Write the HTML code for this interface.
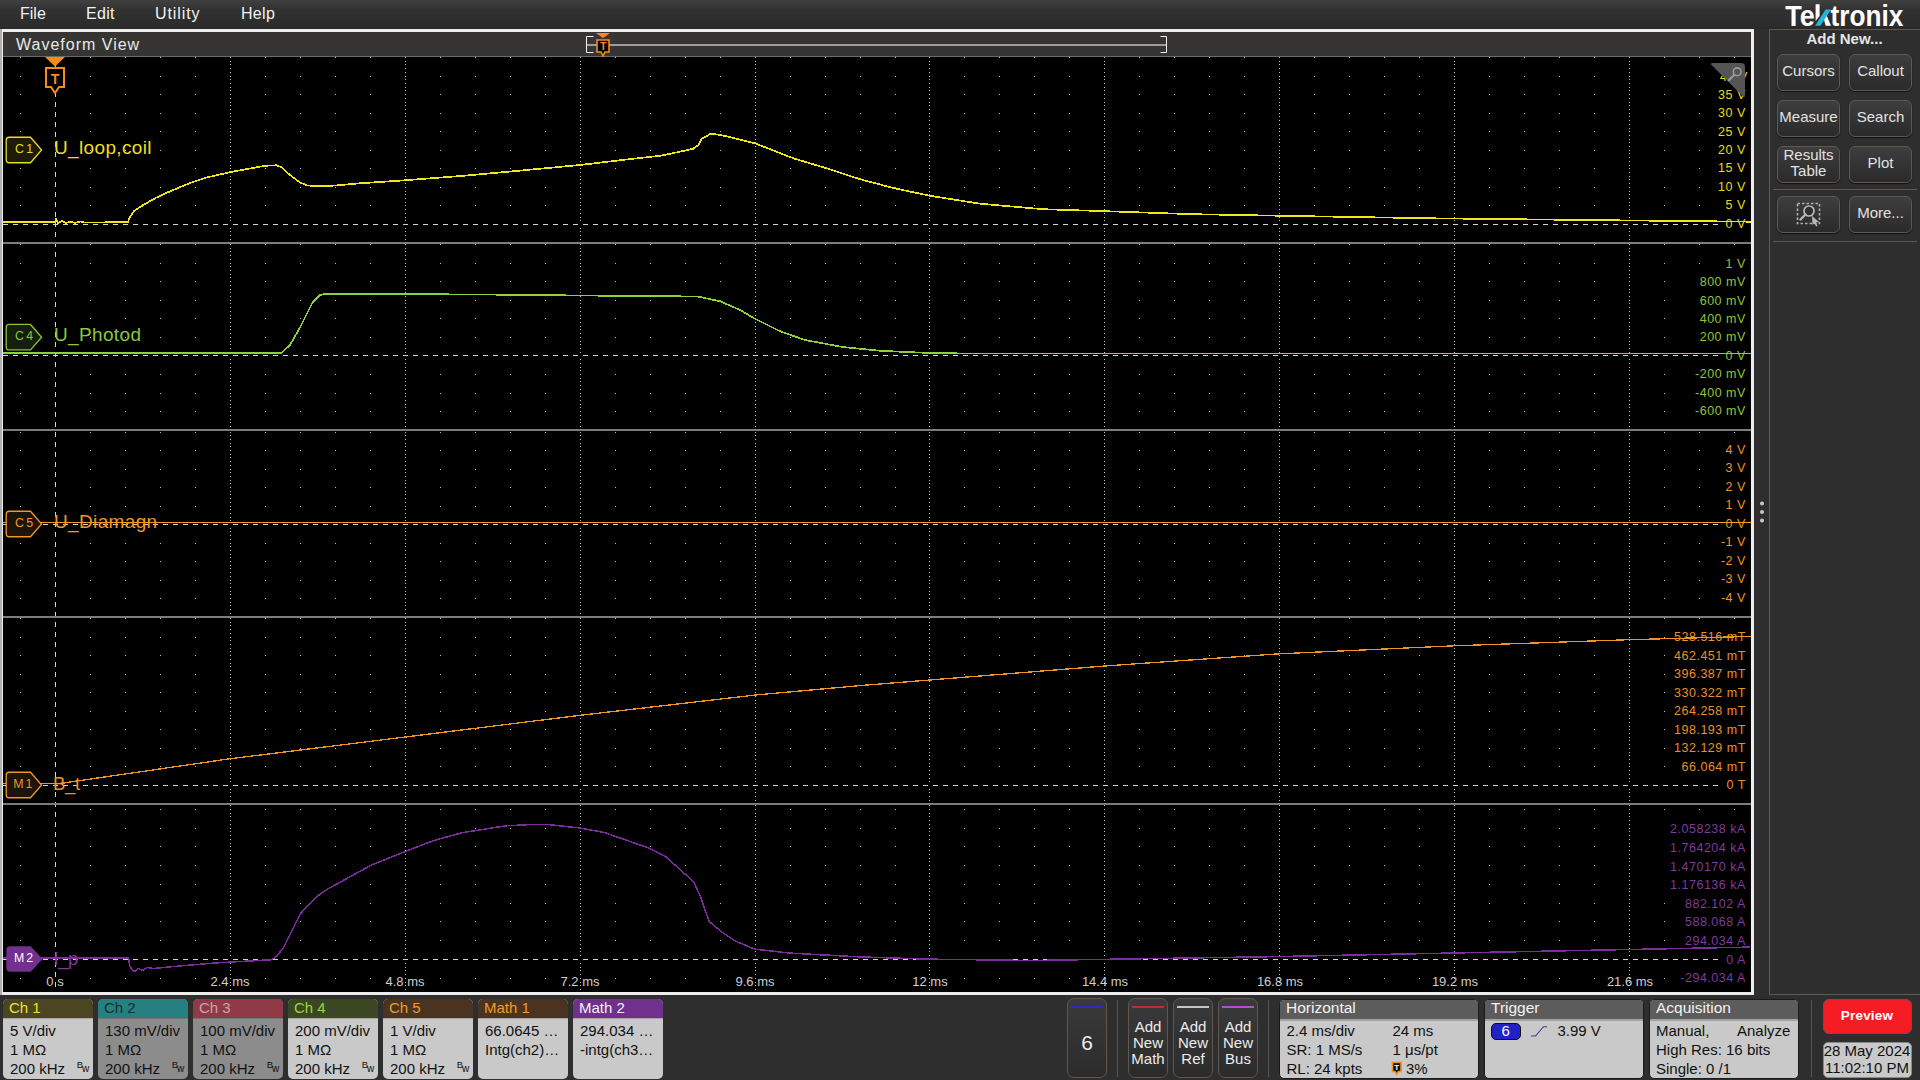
<!DOCTYPE html><html><head><meta charset="utf-8"><title>Tek</title><style>
*{margin:0;padding:0;box-sizing:border-box}
html,body{width:1920px;height:1080px;overflow:hidden;background:#2e2e2e;font-family:"Liberation Sans",sans-serif;}
.a{position:absolute;white-space:nowrap}
.mi{position:absolute;top:4px;font-size:16px;color:#f2f2f2;line-height:20px}
</style></head><body><div class="a" style="left:0;top:0;width:1920px;height:29px;background:linear-gradient(#404040 0px,#313131 10px,#2c2c2c 27px,#262626 29px)"></div><div class="mi" style="left:20px;letter-spacing:0px">File</div><div class="mi" style="left:86px;letter-spacing:0.3px">Edit</div><div class="mi" style="left:155px;letter-spacing:0.9px">Utility</div><div class="mi" style="left:241px;letter-spacing:0.3px">Help</div><div class="a" style="left:0;top:29px;width:1754px;height:966px;background:#ededed"></div><div class="a" style="left:0;top:29px;width:2px;height:966px;background:#b0b0b0"></div><div class="a" style="left:3px;top:32px;width:1748px;height:25px;background:#363533"></div><div class="a" style="left:16px;top:35.5px;font-size:16px;line-height:18px;letter-spacing:1px;color:#e8e8e8">Waveform View</div><div class="a" style="left:3px;top:57px;width:1748px;height:935px;background:#000"></div><svg class="a" style="left:0;top:0" width="1920" height="1080" viewBox="0 0 1920 1080"><path d="M195 205.5h1M160 205.5h1M125 205.5h1M90 205.5h1M20 205.5h1M265 205.5h1M300 205.5h1M335 205.5h1M370 205.5h1M440 205.5h1M475 205.5h1M510 205.5h1M545 205.5h1M615 205.5h1M650 205.5h1M685 205.5h1M720 205.5h1M790 205.5h1M825 205.5h1M860 205.5h1M895 205.5h1M964 205.5h1M999 205.5h1M1034 205.5h1M1069 205.5h1M1139 205.5h1M1174 205.5h1M1209 205.5h1M1244 205.5h1M1314 205.5h1M1349 205.5h1M1384 205.5h1M1419 205.5h1M1489 205.5h1M1524 205.5h1M1559 205.5h1M1594 205.5h1M1664 205.5h1M1699 205.5h1M1734 205.5h1M1769 205.5h1M195 187.5h1M160 187.5h1M125 187.5h1M90 187.5h1M20 187.5h1M265 187.5h1M300 187.5h1M335 187.5h1M370 187.5h1M440 187.5h1M475 187.5h1M510 187.5h1M545 187.5h1M615 187.5h1M650 187.5h1M685 187.5h1M720 187.5h1M790 187.5h1M825 187.5h1M860 187.5h1M895 187.5h1M964 187.5h1M999 187.5h1M1034 187.5h1M1069 187.5h1M1139 187.5h1M1174 187.5h1M1209 187.5h1M1244 187.5h1M1314 187.5h1M1349 187.5h1M1384 187.5h1M1419 187.5h1M1489 187.5h1M1524 187.5h1M1559 187.5h1M1594 187.5h1M1664 187.5h1M1699 187.5h1M1734 187.5h1M1769 187.5h1M195 168.5h1M160 168.5h1M125 168.5h1M90 168.5h1M20 168.5h1M265 168.5h1M300 168.5h1M335 168.5h1M370 168.5h1M440 168.5h1M475 168.5h1M510 168.5h1M545 168.5h1M615 168.5h1M650 168.5h1M685 168.5h1M720 168.5h1M790 168.5h1M825 168.5h1M860 168.5h1M895 168.5h1M964 168.5h1M999 168.5h1M1034 168.5h1M1069 168.5h1M1139 168.5h1M1174 168.5h1M1209 168.5h1M1244 168.5h1M1314 168.5h1M1349 168.5h1M1384 168.5h1M1419 168.5h1M1489 168.5h1M1524 168.5h1M1559 168.5h1M1594 168.5h1M1664 168.5h1M1699 168.5h1M1734 168.5h1M1769 168.5h1M195 150.5h1M160 150.5h1M125 150.5h1M90 150.5h1M20 150.5h1M265 150.5h1M300 150.5h1M335 150.5h1M370 150.5h1M440 150.5h1M475 150.5h1M510 150.5h1M545 150.5h1M615 150.5h1M650 150.5h1M685 150.5h1M720 150.5h1M790 150.5h1M825 150.5h1M860 150.5h1M895 150.5h1M964 150.5h1M999 150.5h1M1034 150.5h1M1069 150.5h1M1139 150.5h1M1174 150.5h1M1209 150.5h1M1244 150.5h1M1314 150.5h1M1349 150.5h1M1384 150.5h1M1419 150.5h1M1489 150.5h1M1524 150.5h1M1559 150.5h1M1594 150.5h1M1664 150.5h1M1699 150.5h1M1734 150.5h1M1769 150.5h1M195 131.5h1M160 131.5h1M125 131.5h1M90 131.5h1M20 131.5h1M265 131.5h1M300 131.5h1M335 131.5h1M370 131.5h1M440 131.5h1M475 131.5h1M510 131.5h1M545 131.5h1M615 131.5h1M650 131.5h1M685 131.5h1M720 131.5h1M790 131.5h1M825 131.5h1M860 131.5h1M895 131.5h1M964 131.5h1M999 131.5h1M1034 131.5h1M1069 131.5h1M1139 131.5h1M1174 131.5h1M1209 131.5h1M1244 131.5h1M1314 131.5h1M1349 131.5h1M1384 131.5h1M1419 131.5h1M1489 131.5h1M1524 131.5h1M1559 131.5h1M1594 131.5h1M1664 131.5h1M1699 131.5h1M1734 131.5h1M1769 131.5h1M195 113.5h1M160 113.5h1M125 113.5h1M90 113.5h1M20 113.5h1M265 113.5h1M300 113.5h1M335 113.5h1M370 113.5h1M440 113.5h1M475 113.5h1M510 113.5h1M545 113.5h1M615 113.5h1M650 113.5h1M685 113.5h1M720 113.5h1M790 113.5h1M825 113.5h1M860 113.5h1M895 113.5h1M964 113.5h1M999 113.5h1M1034 113.5h1M1069 113.5h1M1139 113.5h1M1174 113.5h1M1209 113.5h1M1244 113.5h1M1314 113.5h1M1349 113.5h1M1384 113.5h1M1419 113.5h1M1489 113.5h1M1524 113.5h1M1559 113.5h1M1594 113.5h1M1664 113.5h1M1699 113.5h1M1734 113.5h1M1769 113.5h1M195 94.5h1M160 94.5h1M125 94.5h1M90 94.5h1M20 94.5h1M265 94.5h1M300 94.5h1M335 94.5h1M370 94.5h1M440 94.5h1M475 94.5h1M510 94.5h1M545 94.5h1M615 94.5h1M650 94.5h1M685 94.5h1M720 94.5h1M790 94.5h1M825 94.5h1M860 94.5h1M895 94.5h1M964 94.5h1M999 94.5h1M1034 94.5h1M1069 94.5h1M1139 94.5h1M1174 94.5h1M1209 94.5h1M1244 94.5h1M1314 94.5h1M1349 94.5h1M1384 94.5h1M1419 94.5h1M1489 94.5h1M1524 94.5h1M1559 94.5h1M1594 94.5h1M1664 94.5h1M1699 94.5h1M1734 94.5h1M1769 94.5h1M195 76.5h1M160 76.5h1M125 76.5h1M90 76.5h1M20 76.5h1M265 76.5h1M300 76.5h1M335 76.5h1M370 76.5h1M440 76.5h1M475 76.5h1M510 76.5h1M545 76.5h1M615 76.5h1M650 76.5h1M685 76.5h1M720 76.5h1M790 76.5h1M825 76.5h1M860 76.5h1M895 76.5h1M964 76.5h1M999 76.5h1M1034 76.5h1M1069 76.5h1M1139 76.5h1M1174 76.5h1M1209 76.5h1M1244 76.5h1M1314 76.5h1M1349 76.5h1M1384 76.5h1M1419 76.5h1M1489 76.5h1M1524 76.5h1M1559 76.5h1M1594 76.5h1M1664 76.5h1M1699 76.5h1M1734 76.5h1M1769 76.5h1M195 57.5h1M160 57.5h1M125 57.5h1M90 57.5h1M20 57.5h1M265 57.5h1M300 57.5h1M335 57.5h1M370 57.5h1M440 57.5h1M475 57.5h1M510 57.5h1M545 57.5h1M615 57.5h1M650 57.5h1M685 57.5h1M720 57.5h1M790 57.5h1M825 57.5h1M860 57.5h1M895 57.5h1M964 57.5h1M999 57.5h1M1034 57.5h1M1069 57.5h1M1139 57.5h1M1174 57.5h1M1209 57.5h1M1244 57.5h1M1314 57.5h1M1349 57.5h1M1384 57.5h1M1419 57.5h1M1489 57.5h1M1524 57.5h1M1559 57.5h1M1594 57.5h1M1664 57.5h1M1699 57.5h1M1734 57.5h1M1769 57.5h1M230 239.5h1M405 239.5h1M580 239.5h1M755 239.5h1M929 239.5h1M1104 239.5h1M1279 239.5h1M1454 239.5h1M1629 239.5h1M230 235.5h1M405 235.5h1M580 235.5h1M755 235.5h1M929 235.5h1M1104 235.5h1M1279 235.5h1M1454 235.5h1M1629 235.5h1M230 231.5h1M405 231.5h1M580 231.5h1M755 231.5h1M929 231.5h1M1104 231.5h1M1279 231.5h1M1454 231.5h1M1629 231.5h1M230 228.5h1M405 228.5h1M580 228.5h1M755 228.5h1M929 228.5h1M1104 228.5h1M1279 228.5h1M1454 228.5h1M1629 228.5h1M230 220.5h1M405 220.5h1M580 220.5h1M755 220.5h1M929 220.5h1M1104 220.5h1M1279 220.5h1M1454 220.5h1M1629 220.5h1M230 217.5h1M405 217.5h1M580 217.5h1M755 217.5h1M929 217.5h1M1104 217.5h1M1279 217.5h1M1454 217.5h1M1629 217.5h1M230 213.5h1M405 213.5h1M580 213.5h1M755 213.5h1M929 213.5h1M1104 213.5h1M1279 213.5h1M1454 213.5h1M1629 213.5h1M230 209.5h1M405 209.5h1M580 209.5h1M755 209.5h1M929 209.5h1M1104 209.5h1M1279 209.5h1M1454 209.5h1M1629 209.5h1M230 205.5h1M405 205.5h1M580 205.5h1M755 205.5h1M929 205.5h1M1104 205.5h1M1279 205.5h1M1454 205.5h1M1629 205.5h1M230 202.5h1M405 202.5h1M580 202.5h1M755 202.5h1M929 202.5h1M1104 202.5h1M1279 202.5h1M1454 202.5h1M1629 202.5h1M230 198.5h1M405 198.5h1M580 198.5h1M755 198.5h1M929 198.5h1M1104 198.5h1M1279 198.5h1M1454 198.5h1M1629 198.5h1M230 194.5h1M405 194.5h1M580 194.5h1M755 194.5h1M929 194.5h1M1104 194.5h1M1279 194.5h1M1454 194.5h1M1629 194.5h1M230 191.5h1M405 191.5h1M580 191.5h1M755 191.5h1M929 191.5h1M1104 191.5h1M1279 191.5h1M1454 191.5h1M1629 191.5h1M230 187.5h1M405 187.5h1M580 187.5h1M755 187.5h1M929 187.5h1M1104 187.5h1M1279 187.5h1M1454 187.5h1M1629 187.5h1M230 183.5h1M405 183.5h1M580 183.5h1M755 183.5h1M929 183.5h1M1104 183.5h1M1279 183.5h1M1454 183.5h1M1629 183.5h1M230 179.5h1M405 179.5h1M580 179.5h1M755 179.5h1M929 179.5h1M1104 179.5h1M1279 179.5h1M1454 179.5h1M1629 179.5h1M230 176.5h1M405 176.5h1M580 176.5h1M755 176.5h1M929 176.5h1M1104 176.5h1M1279 176.5h1M1454 176.5h1M1629 176.5h1M230 172.5h1M405 172.5h1M580 172.5h1M755 172.5h1M929 172.5h1M1104 172.5h1M1279 172.5h1M1454 172.5h1M1629 172.5h1M230 168.5h1M405 168.5h1M580 168.5h1M755 168.5h1M929 168.5h1M1104 168.5h1M1279 168.5h1M1454 168.5h1M1629 168.5h1M230 165.5h1M405 165.5h1M580 165.5h1M755 165.5h1M929 165.5h1M1104 165.5h1M1279 165.5h1M1454 165.5h1M1629 165.5h1M230 161.5h1M405 161.5h1M580 161.5h1M755 161.5h1M929 161.5h1M1104 161.5h1M1279 161.5h1M1454 161.5h1M1629 161.5h1M230 157.5h1M405 157.5h1M580 157.5h1M755 157.5h1M929 157.5h1M1104 157.5h1M1279 157.5h1M1454 157.5h1M1629 157.5h1M230 153.5h1M405 153.5h1M580 153.5h1M755 153.5h1M929 153.5h1M1104 153.5h1M1279 153.5h1M1454 153.5h1M1629 153.5h1M230 150.5h1M405 150.5h1M580 150.5h1M755 150.5h1M929 150.5h1M1104 150.5h1M1279 150.5h1M1454 150.5h1M1629 150.5h1M230 146.5h1M405 146.5h1M580 146.5h1M755 146.5h1M929 146.5h1M1104 146.5h1M1279 146.5h1M1454 146.5h1M1629 146.5h1M230 142.5h1M405 142.5h1M580 142.5h1M755 142.5h1M929 142.5h1M1104 142.5h1M1279 142.5h1M1454 142.5h1M1629 142.5h1M230 139.5h1M405 139.5h1M580 139.5h1M755 139.5h1M929 139.5h1M1104 139.5h1M1279 139.5h1M1454 139.5h1M1629 139.5h1M230 135.5h1M405 135.5h1M580 135.5h1M755 135.5h1M929 135.5h1M1104 135.5h1M1279 135.5h1M1454 135.5h1M1629 135.5h1M230 131.5h1M405 131.5h1M580 131.5h1M755 131.5h1M929 131.5h1M1104 131.5h1M1279 131.5h1M1454 131.5h1M1629 131.5h1M230 128.5h1M405 128.5h1M580 128.5h1M755 128.5h1M929 128.5h1M1104 128.5h1M1279 128.5h1M1454 128.5h1M1629 128.5h1M230 124.5h1M405 124.5h1M580 124.5h1M755 124.5h1M929 124.5h1M1104 124.5h1M1279 124.5h1M1454 124.5h1M1629 124.5h1M230 120.5h1M405 120.5h1M580 120.5h1M755 120.5h1M929 120.5h1M1104 120.5h1M1279 120.5h1M1454 120.5h1M1629 120.5h1M230 116.5h1M405 116.5h1M580 116.5h1M755 116.5h1M929 116.5h1M1104 116.5h1M1279 116.5h1M1454 116.5h1M1629 116.5h1M230 113.5h1M405 113.5h1M580 113.5h1M755 113.5h1M929 113.5h1M1104 113.5h1M1279 113.5h1M1454 113.5h1M1629 113.5h1M230 109.5h1M405 109.5h1M580 109.5h1M755 109.5h1M929 109.5h1M1104 109.5h1M1279 109.5h1M1454 109.5h1M1629 109.5h1M230 105.5h1M405 105.5h1M580 105.5h1M755 105.5h1M929 105.5h1M1104 105.5h1M1279 105.5h1M1454 105.5h1M1629 105.5h1M230 102.5h1M405 102.5h1M580 102.5h1M755 102.5h1M929 102.5h1M1104 102.5h1M1279 102.5h1M1454 102.5h1M1629 102.5h1M230 98.5h1M405 98.5h1M580 98.5h1M755 98.5h1M929 98.5h1M1104 98.5h1M1279 98.5h1M1454 98.5h1M1629 98.5h1M230 94.5h1M405 94.5h1M580 94.5h1M755 94.5h1M929 94.5h1M1104 94.5h1M1279 94.5h1M1454 94.5h1M1629 94.5h1M230 90.5h1M405 90.5h1M580 90.5h1M755 90.5h1M929 90.5h1M1104 90.5h1M1279 90.5h1M1454 90.5h1M1629 90.5h1M230 87.5h1M405 87.5h1M580 87.5h1M755 87.5h1M929 87.5h1M1104 87.5h1M1279 87.5h1M1454 87.5h1M1629 87.5h1M230 83.5h1M405 83.5h1M580 83.5h1M755 83.5h1M929 83.5h1M1104 83.5h1M1279 83.5h1M1454 83.5h1M1629 83.5h1M230 79.5h1M405 79.5h1M580 79.5h1M755 79.5h1M929 79.5h1M1104 79.5h1M1279 79.5h1M1454 79.5h1M1629 79.5h1M230 76.5h1M405 76.5h1M580 76.5h1M755 76.5h1M929 76.5h1M1104 76.5h1M1279 76.5h1M1454 76.5h1M1629 76.5h1M230 72.5h1M405 72.5h1M580 72.5h1M755 72.5h1M929 72.5h1M1104 72.5h1M1279 72.5h1M1454 72.5h1M1629 72.5h1M230 68.5h1M405 68.5h1M580 68.5h1M755 68.5h1M929 68.5h1M1104 68.5h1M1279 68.5h1M1454 68.5h1M1629 68.5h1M230 64.5h1M405 64.5h1M580 64.5h1M755 64.5h1M929 64.5h1M1104 64.5h1M1279 64.5h1M1454 64.5h1M1629 64.5h1M230 61.5h1M405 61.5h1M580 61.5h1M755 61.5h1M929 61.5h1M1104 61.5h1M1279 61.5h1M1454 61.5h1M1629 61.5h1M230 57.5h1M405 57.5h1M580 57.5h1M755 57.5h1M929 57.5h1M1104 57.5h1M1279 57.5h1M1454 57.5h1M1629 57.5h1M195 411.5h1M160 411.5h1M125 411.5h1M90 411.5h1M20 411.5h1M265 411.5h1M300 411.5h1M335 411.5h1M370 411.5h1M440 411.5h1M475 411.5h1M510 411.5h1M545 411.5h1M615 411.5h1M650 411.5h1M685 411.5h1M720 411.5h1M790 411.5h1M825 411.5h1M860 411.5h1M895 411.5h1M964 411.5h1M999 411.5h1M1034 411.5h1M1069 411.5h1M1139 411.5h1M1174 411.5h1M1209 411.5h1M1244 411.5h1M1314 411.5h1M1349 411.5h1M1384 411.5h1M1419 411.5h1M1489 411.5h1M1524 411.5h1M1559 411.5h1M1594 411.5h1M1664 411.5h1M1699 411.5h1M1734 411.5h1M1769 411.5h1M195 393.5h1M160 393.5h1M125 393.5h1M90 393.5h1M20 393.5h1M265 393.5h1M300 393.5h1M335 393.5h1M370 393.5h1M440 393.5h1M475 393.5h1M510 393.5h1M545 393.5h1M615 393.5h1M650 393.5h1M685 393.5h1M720 393.5h1M790 393.5h1M825 393.5h1M860 393.5h1M895 393.5h1M964 393.5h1M999 393.5h1M1034 393.5h1M1069 393.5h1M1139 393.5h1M1174 393.5h1M1209 393.5h1M1244 393.5h1M1314 393.5h1M1349 393.5h1M1384 393.5h1M1419 393.5h1M1489 393.5h1M1524 393.5h1M1559 393.5h1M1594 393.5h1M1664 393.5h1M1699 393.5h1M1734 393.5h1M1769 393.5h1M195 374.5h1M160 374.5h1M125 374.5h1M90 374.5h1M20 374.5h1M265 374.5h1M300 374.5h1M335 374.5h1M370 374.5h1M440 374.5h1M475 374.5h1M510 374.5h1M545 374.5h1M615 374.5h1M650 374.5h1M685 374.5h1M720 374.5h1M790 374.5h1M825 374.5h1M860 374.5h1M895 374.5h1M964 374.5h1M999 374.5h1M1034 374.5h1M1069 374.5h1M1139 374.5h1M1174 374.5h1M1209 374.5h1M1244 374.5h1M1314 374.5h1M1349 374.5h1M1384 374.5h1M1419 374.5h1M1489 374.5h1M1524 374.5h1M1559 374.5h1M1594 374.5h1M1664 374.5h1M1699 374.5h1M1734 374.5h1M1769 374.5h1M195 337.5h1M160 337.5h1M125 337.5h1M90 337.5h1M20 337.5h1M265 337.5h1M300 337.5h1M335 337.5h1M370 337.5h1M440 337.5h1M475 337.5h1M510 337.5h1M545 337.5h1M615 337.5h1M650 337.5h1M685 337.5h1M720 337.5h1M790 337.5h1M825 337.5h1M860 337.5h1M895 337.5h1M964 337.5h1M999 337.5h1M1034 337.5h1M1069 337.5h1M1139 337.5h1M1174 337.5h1M1209 337.5h1M1244 337.5h1M1314 337.5h1M1349 337.5h1M1384 337.5h1M1419 337.5h1M1489 337.5h1M1524 337.5h1M1559 337.5h1M1594 337.5h1M1664 337.5h1M1699 337.5h1M1734 337.5h1M1769 337.5h1M195 318.5h1M160 318.5h1M125 318.5h1M90 318.5h1M20 318.5h1M265 318.5h1M300 318.5h1M335 318.5h1M370 318.5h1M440 318.5h1M475 318.5h1M510 318.5h1M545 318.5h1M615 318.5h1M650 318.5h1M685 318.5h1M720 318.5h1M790 318.5h1M825 318.5h1M860 318.5h1M895 318.5h1M964 318.5h1M999 318.5h1M1034 318.5h1M1069 318.5h1M1139 318.5h1M1174 318.5h1M1209 318.5h1M1244 318.5h1M1314 318.5h1M1349 318.5h1M1384 318.5h1M1419 318.5h1M1489 318.5h1M1524 318.5h1M1559 318.5h1M1594 318.5h1M1664 318.5h1M1699 318.5h1M1734 318.5h1M1769 318.5h1M195 300.5h1M160 300.5h1M125 300.5h1M90 300.5h1M20 300.5h1M265 300.5h1M300 300.5h1M335 300.5h1M370 300.5h1M440 300.5h1M475 300.5h1M510 300.5h1M545 300.5h1M615 300.5h1M650 300.5h1M685 300.5h1M720 300.5h1M790 300.5h1M825 300.5h1M860 300.5h1M895 300.5h1M964 300.5h1M999 300.5h1M1034 300.5h1M1069 300.5h1M1139 300.5h1M1174 300.5h1M1209 300.5h1M1244 300.5h1M1314 300.5h1M1349 300.5h1M1384 300.5h1M1419 300.5h1M1489 300.5h1M1524 300.5h1M1559 300.5h1M1594 300.5h1M1664 300.5h1M1699 300.5h1M1734 300.5h1M1769 300.5h1M195 281.5h1M160 281.5h1M125 281.5h1M90 281.5h1M20 281.5h1M265 281.5h1M300 281.5h1M335 281.5h1M370 281.5h1M440 281.5h1M475 281.5h1M510 281.5h1M545 281.5h1M615 281.5h1M650 281.5h1M685 281.5h1M720 281.5h1M790 281.5h1M825 281.5h1M860 281.5h1M895 281.5h1M964 281.5h1M999 281.5h1M1034 281.5h1M1069 281.5h1M1139 281.5h1M1174 281.5h1M1209 281.5h1M1244 281.5h1M1314 281.5h1M1349 281.5h1M1384 281.5h1M1419 281.5h1M1489 281.5h1M1524 281.5h1M1559 281.5h1M1594 281.5h1M1664 281.5h1M1699 281.5h1M1734 281.5h1M1769 281.5h1M195 263.5h1M160 263.5h1M125 263.5h1M90 263.5h1M20 263.5h1M265 263.5h1M300 263.5h1M335 263.5h1M370 263.5h1M440 263.5h1M475 263.5h1M510 263.5h1M545 263.5h1M615 263.5h1M650 263.5h1M685 263.5h1M720 263.5h1M790 263.5h1M825 263.5h1M860 263.5h1M895 263.5h1M964 263.5h1M999 263.5h1M1034 263.5h1M1069 263.5h1M1139 263.5h1M1174 263.5h1M1209 263.5h1M1244 263.5h1M1314 263.5h1M1349 263.5h1M1384 263.5h1M1419 263.5h1M1489 263.5h1M1524 263.5h1M1559 263.5h1M1594 263.5h1M1664 263.5h1M1699 263.5h1M1734 263.5h1M1769 263.5h1M195 244.5h1M160 244.5h1M125 244.5h1M90 244.5h1M20 244.5h1M265 244.5h1M300 244.5h1M335 244.5h1M370 244.5h1M440 244.5h1M475 244.5h1M510 244.5h1M545 244.5h1M615 244.5h1M650 244.5h1M685 244.5h1M720 244.5h1M790 244.5h1M825 244.5h1M860 244.5h1M895 244.5h1M964 244.5h1M999 244.5h1M1034 244.5h1M1069 244.5h1M1139 244.5h1M1174 244.5h1M1209 244.5h1M1244 244.5h1M1314 244.5h1M1349 244.5h1M1384 244.5h1M1419 244.5h1M1489 244.5h1M1524 244.5h1M1559 244.5h1M1594 244.5h1M1664 244.5h1M1699 244.5h1M1734 244.5h1M1769 244.5h1M230 426.5h1M405 426.5h1M580 426.5h1M755 426.5h1M929 426.5h1M1104 426.5h1M1279 426.5h1M1454 426.5h1M1629 426.5h1M230 422.5h1M405 422.5h1M580 422.5h1M755 422.5h1M929 422.5h1M1104 422.5h1M1279 422.5h1M1454 422.5h1M1629 422.5h1M230 419.5h1M405 419.5h1M580 419.5h1M755 419.5h1M929 419.5h1M1104 419.5h1M1279 419.5h1M1454 419.5h1M1629 419.5h1M230 415.5h1M405 415.5h1M580 415.5h1M755 415.5h1M929 415.5h1M1104 415.5h1M1279 415.5h1M1454 415.5h1M1629 415.5h1M230 411.5h1M405 411.5h1M580 411.5h1M755 411.5h1M929 411.5h1M1104 411.5h1M1279 411.5h1M1454 411.5h1M1629 411.5h1M230 407.5h1M405 407.5h1M580 407.5h1M755 407.5h1M929 407.5h1M1104 407.5h1M1279 407.5h1M1454 407.5h1M1629 407.5h1M230 404.5h1M405 404.5h1M580 404.5h1M755 404.5h1M929 404.5h1M1104 404.5h1M1279 404.5h1M1454 404.5h1M1629 404.5h1M230 400.5h1M405 400.5h1M580 400.5h1M755 400.5h1M929 400.5h1M1104 400.5h1M1279 400.5h1M1454 400.5h1M1629 400.5h1M230 396.5h1M405 396.5h1M580 396.5h1M755 396.5h1M929 396.5h1M1104 396.5h1M1279 396.5h1M1454 396.5h1M1629 396.5h1M230 393.5h1M405 393.5h1M580 393.5h1M755 393.5h1M929 393.5h1M1104 393.5h1M1279 393.5h1M1454 393.5h1M1629 393.5h1M230 389.5h1M405 389.5h1M580 389.5h1M755 389.5h1M929 389.5h1M1104 389.5h1M1279 389.5h1M1454 389.5h1M1629 389.5h1M230 385.5h1M405 385.5h1M580 385.5h1M755 385.5h1M929 385.5h1M1104 385.5h1M1279 385.5h1M1454 385.5h1M1629 385.5h1M230 381.5h1M405 381.5h1M580 381.5h1M755 381.5h1M929 381.5h1M1104 381.5h1M1279 381.5h1M1454 381.5h1M1629 381.5h1M230 378.5h1M405 378.5h1M580 378.5h1M755 378.5h1M929 378.5h1M1104 378.5h1M1279 378.5h1M1454 378.5h1M1629 378.5h1M230 374.5h1M405 374.5h1M580 374.5h1M755 374.5h1M929 374.5h1M1104 374.5h1M1279 374.5h1M1454 374.5h1M1629 374.5h1M230 370.5h1M405 370.5h1M580 370.5h1M755 370.5h1M929 370.5h1M1104 370.5h1M1279 370.5h1M1454 370.5h1M1629 370.5h1M230 367.5h1M405 367.5h1M580 367.5h1M755 367.5h1M929 367.5h1M1104 367.5h1M1279 367.5h1M1454 367.5h1M1629 367.5h1M230 363.5h1M405 363.5h1M580 363.5h1M755 363.5h1M929 363.5h1M1104 363.5h1M1279 363.5h1M1454 363.5h1M1629 363.5h1M230 359.5h1M405 359.5h1M580 359.5h1M755 359.5h1M929 359.5h1M1104 359.5h1M1279 359.5h1M1454 359.5h1M1629 359.5h1M230 352.5h1M405 352.5h1M580 352.5h1M755 352.5h1M929 352.5h1M1104 352.5h1M1279 352.5h1M1454 352.5h1M1629 352.5h1M230 348.5h1M405 348.5h1M580 348.5h1M755 348.5h1M929 348.5h1M1104 348.5h1M1279 348.5h1M1454 348.5h1M1629 348.5h1M230 344.5h1M405 344.5h1M580 344.5h1M755 344.5h1M929 344.5h1M1104 344.5h1M1279 344.5h1M1454 344.5h1M1629 344.5h1M230 341.5h1M405 341.5h1M580 341.5h1M755 341.5h1M929 341.5h1M1104 341.5h1M1279 341.5h1M1454 341.5h1M1629 341.5h1M230 337.5h1M405 337.5h1M580 337.5h1M755 337.5h1M929 337.5h1M1104 337.5h1M1279 337.5h1M1454 337.5h1M1629 337.5h1M230 333.5h1M405 333.5h1M580 333.5h1M755 333.5h1M929 333.5h1M1104 333.5h1M1279 333.5h1M1454 333.5h1M1629 333.5h1M230 329.5h1M405 329.5h1M580 329.5h1M755 329.5h1M929 329.5h1M1104 329.5h1M1279 329.5h1M1454 329.5h1M1629 329.5h1M230 326.5h1M405 326.5h1M580 326.5h1M755 326.5h1M929 326.5h1M1104 326.5h1M1279 326.5h1M1454 326.5h1M1629 326.5h1M230 322.5h1M405 322.5h1M580 322.5h1M755 322.5h1M929 322.5h1M1104 322.5h1M1279 322.5h1M1454 322.5h1M1629 322.5h1M230 318.5h1M405 318.5h1M580 318.5h1M755 318.5h1M929 318.5h1M1104 318.5h1M1279 318.5h1M1454 318.5h1M1629 318.5h1M230 315.5h1M405 315.5h1M580 315.5h1M755 315.5h1M929 315.5h1M1104 315.5h1M1279 315.5h1M1454 315.5h1M1629 315.5h1M230 311.5h1M405 311.5h1M580 311.5h1M755 311.5h1M929 311.5h1M1104 311.5h1M1279 311.5h1M1454 311.5h1M1629 311.5h1M230 307.5h1M405 307.5h1M580 307.5h1M755 307.5h1M929 307.5h1M1104 307.5h1M1279 307.5h1M1454 307.5h1M1629 307.5h1M230 303.5h1M405 303.5h1M580 303.5h1M755 303.5h1M929 303.5h1M1104 303.5h1M1279 303.5h1M1454 303.5h1M1629 303.5h1M230 300.5h1M405 300.5h1M580 300.5h1M755 300.5h1M929 300.5h1M1104 300.5h1M1279 300.5h1M1454 300.5h1M1629 300.5h1M230 296.5h1M405 296.5h1M580 296.5h1M755 296.5h1M929 296.5h1M1104 296.5h1M1279 296.5h1M1454 296.5h1M1629 296.5h1M230 292.5h1M405 292.5h1M580 292.5h1M755 292.5h1M929 292.5h1M1104 292.5h1M1279 292.5h1M1454 292.5h1M1629 292.5h1M230 289.5h1M405 289.5h1M580 289.5h1M755 289.5h1M929 289.5h1M1104 289.5h1M1279 289.5h1M1454 289.5h1M1629 289.5h1M230 285.5h1M405 285.5h1M580 285.5h1M755 285.5h1M929 285.5h1M1104 285.5h1M1279 285.5h1M1454 285.5h1M1629 285.5h1M230 281.5h1M405 281.5h1M580 281.5h1M755 281.5h1M929 281.5h1M1104 281.5h1M1279 281.5h1M1454 281.5h1M1629 281.5h1M230 277.5h1M405 277.5h1M580 277.5h1M755 277.5h1M929 277.5h1M1104 277.5h1M1279 277.5h1M1454 277.5h1M1629 277.5h1M230 274.5h1M405 274.5h1M580 274.5h1M755 274.5h1M929 274.5h1M1104 274.5h1M1279 274.5h1M1454 274.5h1M1629 274.5h1M230 270.5h1M405 270.5h1M580 270.5h1M755 270.5h1M929 270.5h1M1104 270.5h1M1279 270.5h1M1454 270.5h1M1629 270.5h1M230 266.5h1M405 266.5h1M580 266.5h1M755 266.5h1M929 266.5h1M1104 266.5h1M1279 266.5h1M1454 266.5h1M1629 266.5h1M230 263.5h1M405 263.5h1M580 263.5h1M755 263.5h1M929 263.5h1M1104 263.5h1M1279 263.5h1M1454 263.5h1M1629 263.5h1M230 259.5h1M405 259.5h1M580 259.5h1M755 259.5h1M929 259.5h1M1104 259.5h1M1279 259.5h1M1454 259.5h1M1629 259.5h1M230 255.5h1M405 255.5h1M580 255.5h1M755 255.5h1M929 255.5h1M1104 255.5h1M1279 255.5h1M1454 255.5h1M1629 255.5h1M230 251.5h1M405 251.5h1M580 251.5h1M755 251.5h1M929 251.5h1M1104 251.5h1M1279 251.5h1M1454 251.5h1M1629 251.5h1M230 248.5h1M405 248.5h1M580 248.5h1M755 248.5h1M929 248.5h1M1104 248.5h1M1279 248.5h1M1454 248.5h1M1629 248.5h1M230 244.5h1M405 244.5h1M580 244.5h1M755 244.5h1M929 244.5h1M1104 244.5h1M1279 244.5h1M1454 244.5h1M1629 244.5h1M195 598.5h1M160 598.5h1M125 598.5h1M90 598.5h1M20 598.5h1M265 598.5h1M300 598.5h1M335 598.5h1M370 598.5h1M440 598.5h1M475 598.5h1M510 598.5h1M545 598.5h1M615 598.5h1M650 598.5h1M685 598.5h1M720 598.5h1M790 598.5h1M825 598.5h1M860 598.5h1M895 598.5h1M964 598.5h1M999 598.5h1M1034 598.5h1M1069 598.5h1M1139 598.5h1M1174 598.5h1M1209 598.5h1M1244 598.5h1M1314 598.5h1M1349 598.5h1M1384 598.5h1M1419 598.5h1M1489 598.5h1M1524 598.5h1M1559 598.5h1M1594 598.5h1M1664 598.5h1M1699 598.5h1M1734 598.5h1M1769 598.5h1M195 580.5h1M160 580.5h1M125 580.5h1M90 580.5h1M20 580.5h1M265 580.5h1M300 580.5h1M335 580.5h1M370 580.5h1M440 580.5h1M475 580.5h1M510 580.5h1M545 580.5h1M615 580.5h1M650 580.5h1M685 580.5h1M720 580.5h1M790 580.5h1M825 580.5h1M860 580.5h1M895 580.5h1M964 580.5h1M999 580.5h1M1034 580.5h1M1069 580.5h1M1139 580.5h1M1174 580.5h1M1209 580.5h1M1244 580.5h1M1314 580.5h1M1349 580.5h1M1384 580.5h1M1419 580.5h1M1489 580.5h1M1524 580.5h1M1559 580.5h1M1594 580.5h1M1664 580.5h1M1699 580.5h1M1734 580.5h1M1769 580.5h1M195 561.5h1M160 561.5h1M125 561.5h1M90 561.5h1M20 561.5h1M265 561.5h1M300 561.5h1M335 561.5h1M370 561.5h1M440 561.5h1M475 561.5h1M510 561.5h1M545 561.5h1M615 561.5h1M650 561.5h1M685 561.5h1M720 561.5h1M790 561.5h1M825 561.5h1M860 561.5h1M895 561.5h1M964 561.5h1M999 561.5h1M1034 561.5h1M1069 561.5h1M1139 561.5h1M1174 561.5h1M1209 561.5h1M1244 561.5h1M1314 561.5h1M1349 561.5h1M1384 561.5h1M1419 561.5h1M1489 561.5h1M1524 561.5h1M1559 561.5h1M1594 561.5h1M1664 561.5h1M1699 561.5h1M1734 561.5h1M1769 561.5h1M195 543.5h1M160 543.5h1M125 543.5h1M90 543.5h1M20 543.5h1M265 543.5h1M300 543.5h1M335 543.5h1M370 543.5h1M440 543.5h1M475 543.5h1M510 543.5h1M545 543.5h1M615 543.5h1M650 543.5h1M685 543.5h1M720 543.5h1M790 543.5h1M825 543.5h1M860 543.5h1M895 543.5h1M964 543.5h1M999 543.5h1M1034 543.5h1M1069 543.5h1M1139 543.5h1M1174 543.5h1M1209 543.5h1M1244 543.5h1M1314 543.5h1M1349 543.5h1M1384 543.5h1M1419 543.5h1M1489 543.5h1M1524 543.5h1M1559 543.5h1M1594 543.5h1M1664 543.5h1M1699 543.5h1M1734 543.5h1M1769 543.5h1M195 506.5h1M160 506.5h1M125 506.5h1M90 506.5h1M20 506.5h1M265 506.5h1M300 506.5h1M335 506.5h1M370 506.5h1M440 506.5h1M475 506.5h1M510 506.5h1M545 506.5h1M615 506.5h1M650 506.5h1M685 506.5h1M720 506.5h1M790 506.5h1M825 506.5h1M860 506.5h1M895 506.5h1M964 506.5h1M999 506.5h1M1034 506.5h1M1069 506.5h1M1139 506.5h1M1174 506.5h1M1209 506.5h1M1244 506.5h1M1314 506.5h1M1349 506.5h1M1384 506.5h1M1419 506.5h1M1489 506.5h1M1524 506.5h1M1559 506.5h1M1594 506.5h1M1664 506.5h1M1699 506.5h1M1734 506.5h1M1769 506.5h1M195 487.5h1M160 487.5h1M125 487.5h1M90 487.5h1M20 487.5h1M265 487.5h1M300 487.5h1M335 487.5h1M370 487.5h1M440 487.5h1M475 487.5h1M510 487.5h1M545 487.5h1M615 487.5h1M650 487.5h1M685 487.5h1M720 487.5h1M790 487.5h1M825 487.5h1M860 487.5h1M895 487.5h1M964 487.5h1M999 487.5h1M1034 487.5h1M1069 487.5h1M1139 487.5h1M1174 487.5h1M1209 487.5h1M1244 487.5h1M1314 487.5h1M1349 487.5h1M1384 487.5h1M1419 487.5h1M1489 487.5h1M1524 487.5h1M1559 487.5h1M1594 487.5h1M1664 487.5h1M1699 487.5h1M1734 487.5h1M1769 487.5h1M195 469.5h1M160 469.5h1M125 469.5h1M90 469.5h1M20 469.5h1M265 469.5h1M300 469.5h1M335 469.5h1M370 469.5h1M440 469.5h1M475 469.5h1M510 469.5h1M545 469.5h1M615 469.5h1M650 469.5h1M685 469.5h1M720 469.5h1M790 469.5h1M825 469.5h1M860 469.5h1M895 469.5h1M964 469.5h1M999 469.5h1M1034 469.5h1M1069 469.5h1M1139 469.5h1M1174 469.5h1M1209 469.5h1M1244 469.5h1M1314 469.5h1M1349 469.5h1M1384 469.5h1M1419 469.5h1M1489 469.5h1M1524 469.5h1M1559 469.5h1M1594 469.5h1M1664 469.5h1M1699 469.5h1M1734 469.5h1M1769 469.5h1M195 450.5h1M160 450.5h1M125 450.5h1M90 450.5h1M20 450.5h1M265 450.5h1M300 450.5h1M335 450.5h1M370 450.5h1M440 450.5h1M475 450.5h1M510 450.5h1M545 450.5h1M615 450.5h1M650 450.5h1M685 450.5h1M720 450.5h1M790 450.5h1M825 450.5h1M860 450.5h1M895 450.5h1M964 450.5h1M999 450.5h1M1034 450.5h1M1069 450.5h1M1139 450.5h1M1174 450.5h1M1209 450.5h1M1244 450.5h1M1314 450.5h1M1349 450.5h1M1384 450.5h1M1419 450.5h1M1489 450.5h1M1524 450.5h1M1559 450.5h1M1594 450.5h1M1664 450.5h1M1699 450.5h1M1734 450.5h1M1769 450.5h1M195 432.5h1M160 432.5h1M125 432.5h1M90 432.5h1M20 432.5h1M265 432.5h1M300 432.5h1M335 432.5h1M370 432.5h1M440 432.5h1M475 432.5h1M510 432.5h1M545 432.5h1M615 432.5h1M650 432.5h1M685 432.5h1M720 432.5h1M790 432.5h1M825 432.5h1M860 432.5h1M895 432.5h1M964 432.5h1M999 432.5h1M1034 432.5h1M1069 432.5h1M1139 432.5h1M1174 432.5h1M1209 432.5h1M1244 432.5h1M1314 432.5h1M1349 432.5h1M1384 432.5h1M1419 432.5h1M1489 432.5h1M1524 432.5h1M1559 432.5h1M1594 432.5h1M1664 432.5h1M1699 432.5h1M1734 432.5h1M1769 432.5h1M230 613.5h1M405 613.5h1M580 613.5h1M755 613.5h1M929 613.5h1M1104 613.5h1M1279 613.5h1M1454 613.5h1M1629 613.5h1M230 609.5h1M405 609.5h1M580 609.5h1M755 609.5h1M929 609.5h1M1104 609.5h1M1279 609.5h1M1454 609.5h1M1629 609.5h1M230 605.5h1M405 605.5h1M580 605.5h1M755 605.5h1M929 605.5h1M1104 605.5h1M1279 605.5h1M1454 605.5h1M1629 605.5h1M230 602.5h1M405 602.5h1M580 602.5h1M755 602.5h1M929 602.5h1M1104 602.5h1M1279 602.5h1M1454 602.5h1M1629 602.5h1M230 598.5h1M405 598.5h1M580 598.5h1M755 598.5h1M929 598.5h1M1104 598.5h1M1279 598.5h1M1454 598.5h1M1629 598.5h1M230 594.5h1M405 594.5h1M580 594.5h1M755 594.5h1M929 594.5h1M1104 594.5h1M1279 594.5h1M1454 594.5h1M1629 594.5h1M230 591.5h1M405 591.5h1M580 591.5h1M755 591.5h1M929 591.5h1M1104 591.5h1M1279 591.5h1M1454 591.5h1M1629 591.5h1M230 587.5h1M405 587.5h1M580 587.5h1M755 587.5h1M929 587.5h1M1104 587.5h1M1279 587.5h1M1454 587.5h1M1629 587.5h1M230 583.5h1M405 583.5h1M580 583.5h1M755 583.5h1M929 583.5h1M1104 583.5h1M1279 583.5h1M1454 583.5h1M1629 583.5h1M230 580.5h1M405 580.5h1M580 580.5h1M755 580.5h1M929 580.5h1M1104 580.5h1M1279 580.5h1M1454 580.5h1M1629 580.5h1M230 576.5h1M405 576.5h1M580 576.5h1M755 576.5h1M929 576.5h1M1104 576.5h1M1279 576.5h1M1454 576.5h1M1629 576.5h1M230 572.5h1M405 572.5h1M580 572.5h1M755 572.5h1M929 572.5h1M1104 572.5h1M1279 572.5h1M1454 572.5h1M1629 572.5h1M230 568.5h1M405 568.5h1M580 568.5h1M755 568.5h1M929 568.5h1M1104 568.5h1M1279 568.5h1M1454 568.5h1M1629 568.5h1M230 565.5h1M405 565.5h1M580 565.5h1M755 565.5h1M929 565.5h1M1104 565.5h1M1279 565.5h1M1454 565.5h1M1629 565.5h1M230 561.5h1M405 561.5h1M580 561.5h1M755 561.5h1M929 561.5h1M1104 561.5h1M1279 561.5h1M1454 561.5h1M1629 561.5h1M230 557.5h1M405 557.5h1M580 557.5h1M755 557.5h1M929 557.5h1M1104 557.5h1M1279 557.5h1M1454 557.5h1M1629 557.5h1M230 554.5h1M405 554.5h1M580 554.5h1M755 554.5h1M929 554.5h1M1104 554.5h1M1279 554.5h1M1454 554.5h1M1629 554.5h1M230 550.5h1M405 550.5h1M580 550.5h1M755 550.5h1M929 550.5h1M1104 550.5h1M1279 550.5h1M1454 550.5h1M1629 550.5h1M230 546.5h1M405 546.5h1M580 546.5h1M755 546.5h1M929 546.5h1M1104 546.5h1M1279 546.5h1M1454 546.5h1M1629 546.5h1M230 543.5h1M405 543.5h1M580 543.5h1M755 543.5h1M929 543.5h1M1104 543.5h1M1279 543.5h1M1454 543.5h1M1629 543.5h1M230 539.5h1M405 539.5h1M580 539.5h1M755 539.5h1M929 539.5h1M1104 539.5h1M1279 539.5h1M1454 539.5h1M1629 539.5h1M230 535.5h1M405 535.5h1M580 535.5h1M755 535.5h1M929 535.5h1M1104 535.5h1M1279 535.5h1M1454 535.5h1M1629 535.5h1M230 531.5h1M405 531.5h1M580 531.5h1M755 531.5h1M929 531.5h1M1104 531.5h1M1279 531.5h1M1454 531.5h1M1629 531.5h1M230 528.5h1M405 528.5h1M580 528.5h1M755 528.5h1M929 528.5h1M1104 528.5h1M1279 528.5h1M1454 528.5h1M1629 528.5h1M230 520.5h1M405 520.5h1M580 520.5h1M755 520.5h1M929 520.5h1M1104 520.5h1M1279 520.5h1M1454 520.5h1M1629 520.5h1M230 517.5h1M405 517.5h1M580 517.5h1M755 517.5h1M929 517.5h1M1104 517.5h1M1279 517.5h1M1454 517.5h1M1629 517.5h1M230 513.5h1M405 513.5h1M580 513.5h1M755 513.5h1M929 513.5h1M1104 513.5h1M1279 513.5h1M1454 513.5h1M1629 513.5h1M230 509.5h1M405 509.5h1M580 509.5h1M755 509.5h1M929 509.5h1M1104 509.5h1M1279 509.5h1M1454 509.5h1M1629 509.5h1M230 506.5h1M405 506.5h1M580 506.5h1M755 506.5h1M929 506.5h1M1104 506.5h1M1279 506.5h1M1454 506.5h1M1629 506.5h1M230 502.5h1M405 502.5h1M580 502.5h1M755 502.5h1M929 502.5h1M1104 502.5h1M1279 502.5h1M1454 502.5h1M1629 502.5h1M230 498.5h1M405 498.5h1M580 498.5h1M755 498.5h1M929 498.5h1M1104 498.5h1M1279 498.5h1M1454 498.5h1M1629 498.5h1M230 494.5h1M405 494.5h1M580 494.5h1M755 494.5h1M929 494.5h1M1104 494.5h1M1279 494.5h1M1454 494.5h1M1629 494.5h1M230 491.5h1M405 491.5h1M580 491.5h1M755 491.5h1M929 491.5h1M1104 491.5h1M1279 491.5h1M1454 491.5h1M1629 491.5h1M230 487.5h1M405 487.5h1M580 487.5h1M755 487.5h1M929 487.5h1M1104 487.5h1M1279 487.5h1M1454 487.5h1M1629 487.5h1M230 483.5h1M405 483.5h1M580 483.5h1M755 483.5h1M929 483.5h1M1104 483.5h1M1279 483.5h1M1454 483.5h1M1629 483.5h1M230 480.5h1M405 480.5h1M580 480.5h1M755 480.5h1M929 480.5h1M1104 480.5h1M1279 480.5h1M1454 480.5h1M1629 480.5h1M230 476.5h1M405 476.5h1M580 476.5h1M755 476.5h1M929 476.5h1M1104 476.5h1M1279 476.5h1M1454 476.5h1M1629 476.5h1M230 472.5h1M405 472.5h1M580 472.5h1M755 472.5h1M929 472.5h1M1104 472.5h1M1279 472.5h1M1454 472.5h1M1629 472.5h1M230 469.5h1M405 469.5h1M580 469.5h1M755 469.5h1M929 469.5h1M1104 469.5h1M1279 469.5h1M1454 469.5h1M1629 469.5h1M230 465.5h1M405 465.5h1M580 465.5h1M755 465.5h1M929 465.5h1M1104 465.5h1M1279 465.5h1M1454 465.5h1M1629 465.5h1M230 461.5h1M405 461.5h1M580 461.5h1M755 461.5h1M929 461.5h1M1104 461.5h1M1279 461.5h1M1454 461.5h1M1629 461.5h1M230 457.5h1M405 457.5h1M580 457.5h1M755 457.5h1M929 457.5h1M1104 457.5h1M1279 457.5h1M1454 457.5h1M1629 457.5h1M230 454.5h1M405 454.5h1M580 454.5h1M755 454.5h1M929 454.5h1M1104 454.5h1M1279 454.5h1M1454 454.5h1M1629 454.5h1M230 450.5h1M405 450.5h1M580 450.5h1M755 450.5h1M929 450.5h1M1104 450.5h1M1279 450.5h1M1454 450.5h1M1629 450.5h1M230 446.5h1M405 446.5h1M580 446.5h1M755 446.5h1M929 446.5h1M1104 446.5h1M1279 446.5h1M1454 446.5h1M1629 446.5h1M230 443.5h1M405 443.5h1M580 443.5h1M755 443.5h1M929 443.5h1M1104 443.5h1M1279 443.5h1M1454 443.5h1M1629 443.5h1M230 439.5h1M405 439.5h1M580 439.5h1M755 439.5h1M929 439.5h1M1104 439.5h1M1279 439.5h1M1454 439.5h1M1629 439.5h1M230 435.5h1M405 435.5h1M580 435.5h1M755 435.5h1M929 435.5h1M1104 435.5h1M1279 435.5h1M1454 435.5h1M1629 435.5h1M230 432.5h1M405 432.5h1M580 432.5h1M755 432.5h1M929 432.5h1M1104 432.5h1M1279 432.5h1M1454 432.5h1M1629 432.5h1M195 766.5h1M160 766.5h1M125 766.5h1M90 766.5h1M20 766.5h1M265 766.5h1M300 766.5h1M335 766.5h1M370 766.5h1M440 766.5h1M475 766.5h1M510 766.5h1M545 766.5h1M615 766.5h1M650 766.5h1M685 766.5h1M720 766.5h1M790 766.5h1M825 766.5h1M860 766.5h1M895 766.5h1M964 766.5h1M999 766.5h1M1034 766.5h1M1069 766.5h1M1139 766.5h1M1174 766.5h1M1209 766.5h1M1244 766.5h1M1314 766.5h1M1349 766.5h1M1384 766.5h1M1419 766.5h1M1489 766.5h1M1524 766.5h1M1559 766.5h1M1594 766.5h1M1664 766.5h1M1699 766.5h1M1734 766.5h1M1769 766.5h1M195 748.5h1M160 748.5h1M125 748.5h1M90 748.5h1M20 748.5h1M265 748.5h1M300 748.5h1M335 748.5h1M370 748.5h1M440 748.5h1M475 748.5h1M510 748.5h1M545 748.5h1M615 748.5h1M650 748.5h1M685 748.5h1M720 748.5h1M790 748.5h1M825 748.5h1M860 748.5h1M895 748.5h1M964 748.5h1M999 748.5h1M1034 748.5h1M1069 748.5h1M1139 748.5h1M1174 748.5h1M1209 748.5h1M1244 748.5h1M1314 748.5h1M1349 748.5h1M1384 748.5h1M1419 748.5h1M1489 748.5h1M1524 748.5h1M1559 748.5h1M1594 748.5h1M1664 748.5h1M1699 748.5h1M1734 748.5h1M1769 748.5h1M195 729.5h1M160 729.5h1M125 729.5h1M90 729.5h1M20 729.5h1M265 729.5h1M300 729.5h1M335 729.5h1M370 729.5h1M440 729.5h1M475 729.5h1M510 729.5h1M545 729.5h1M615 729.5h1M650 729.5h1M685 729.5h1M720 729.5h1M790 729.5h1M825 729.5h1M860 729.5h1M895 729.5h1M964 729.5h1M999 729.5h1M1034 729.5h1M1069 729.5h1M1139 729.5h1M1174 729.5h1M1209 729.5h1M1244 729.5h1M1314 729.5h1M1349 729.5h1M1384 729.5h1M1419 729.5h1M1489 729.5h1M1524 729.5h1M1559 729.5h1M1594 729.5h1M1664 729.5h1M1699 729.5h1M1734 729.5h1M1769 729.5h1M195 711.5h1M160 711.5h1M125 711.5h1M90 711.5h1M20 711.5h1M265 711.5h1M300 711.5h1M335 711.5h1M370 711.5h1M440 711.5h1M475 711.5h1M510 711.5h1M545 711.5h1M615 711.5h1M650 711.5h1M685 711.5h1M720 711.5h1M790 711.5h1M825 711.5h1M860 711.5h1M895 711.5h1M964 711.5h1M999 711.5h1M1034 711.5h1M1069 711.5h1M1139 711.5h1M1174 711.5h1M1209 711.5h1M1244 711.5h1M1314 711.5h1M1349 711.5h1M1384 711.5h1M1419 711.5h1M1489 711.5h1M1524 711.5h1M1559 711.5h1M1594 711.5h1M1664 711.5h1M1699 711.5h1M1734 711.5h1M1769 711.5h1M195 692.5h1M160 692.5h1M125 692.5h1M90 692.5h1M20 692.5h1M265 692.5h1M300 692.5h1M335 692.5h1M370 692.5h1M440 692.5h1M475 692.5h1M510 692.5h1M545 692.5h1M615 692.5h1M650 692.5h1M685 692.5h1M720 692.5h1M790 692.5h1M825 692.5h1M860 692.5h1M895 692.5h1M964 692.5h1M999 692.5h1M1034 692.5h1M1069 692.5h1M1139 692.5h1M1174 692.5h1M1209 692.5h1M1244 692.5h1M1314 692.5h1M1349 692.5h1M1384 692.5h1M1419 692.5h1M1489 692.5h1M1524 692.5h1M1559 692.5h1M1594 692.5h1M1664 692.5h1M1699 692.5h1M1734 692.5h1M1769 692.5h1M195 674.5h1M160 674.5h1M125 674.5h1M90 674.5h1M20 674.5h1M265 674.5h1M300 674.5h1M335 674.5h1M370 674.5h1M440 674.5h1M475 674.5h1M510 674.5h1M545 674.5h1M615 674.5h1M650 674.5h1M685 674.5h1M720 674.5h1M790 674.5h1M825 674.5h1M860 674.5h1M895 674.5h1M964 674.5h1M999 674.5h1M1034 674.5h1M1069 674.5h1M1139 674.5h1M1174 674.5h1M1209 674.5h1M1244 674.5h1M1314 674.5h1M1349 674.5h1M1384 674.5h1M1419 674.5h1M1489 674.5h1M1524 674.5h1M1559 674.5h1M1594 674.5h1M1664 674.5h1M1699 674.5h1M1734 674.5h1M1769 674.5h1M195 655.5h1M160 655.5h1M125 655.5h1M90 655.5h1M20 655.5h1M265 655.5h1M300 655.5h1M335 655.5h1M370 655.5h1M440 655.5h1M475 655.5h1M510 655.5h1M545 655.5h1M615 655.5h1M650 655.5h1M685 655.5h1M720 655.5h1M790 655.5h1M825 655.5h1M860 655.5h1M895 655.5h1M964 655.5h1M999 655.5h1M1034 655.5h1M1069 655.5h1M1139 655.5h1M1174 655.5h1M1209 655.5h1M1244 655.5h1M1314 655.5h1M1349 655.5h1M1384 655.5h1M1419 655.5h1M1489 655.5h1M1524 655.5h1M1559 655.5h1M1594 655.5h1M1664 655.5h1M1699 655.5h1M1734 655.5h1M1769 655.5h1M195 637.5h1M160 637.5h1M125 637.5h1M90 637.5h1M20 637.5h1M265 637.5h1M300 637.5h1M335 637.5h1M370 637.5h1M440 637.5h1M475 637.5h1M510 637.5h1M545 637.5h1M615 637.5h1M650 637.5h1M685 637.5h1M720 637.5h1M790 637.5h1M825 637.5h1M860 637.5h1M895 637.5h1M964 637.5h1M999 637.5h1M1034 637.5h1M1069 637.5h1M1139 637.5h1M1174 637.5h1M1209 637.5h1M1244 637.5h1M1314 637.5h1M1349 637.5h1M1384 637.5h1M1419 637.5h1M1489 637.5h1M1524 637.5h1M1559 637.5h1M1594 637.5h1M1664 637.5h1M1699 637.5h1M1734 637.5h1M1769 637.5h1M195 618.5h1M160 618.5h1M125 618.5h1M90 618.5h1M20 618.5h1M265 618.5h1M300 618.5h1M335 618.5h1M370 618.5h1M440 618.5h1M475 618.5h1M510 618.5h1M545 618.5h1M615 618.5h1M650 618.5h1M685 618.5h1M720 618.5h1M790 618.5h1M825 618.5h1M860 618.5h1M895 618.5h1M964 618.5h1M999 618.5h1M1034 618.5h1M1069 618.5h1M1139 618.5h1M1174 618.5h1M1209 618.5h1M1244 618.5h1M1314 618.5h1M1349 618.5h1M1384 618.5h1M1419 618.5h1M1489 618.5h1M1524 618.5h1M1559 618.5h1M1594 618.5h1M1664 618.5h1M1699 618.5h1M1734 618.5h1M1769 618.5h1M230 800.5h1M405 800.5h1M580 800.5h1M755 800.5h1M929 800.5h1M1104 800.5h1M1279 800.5h1M1454 800.5h1M1629 800.5h1M230 796.5h1M405 796.5h1M580 796.5h1M755 796.5h1M929 796.5h1M1104 796.5h1M1279 796.5h1M1454 796.5h1M1629 796.5h1M230 792.5h1M405 792.5h1M580 792.5h1M755 792.5h1M929 792.5h1M1104 792.5h1M1279 792.5h1M1454 792.5h1M1629 792.5h1M230 789.5h1M405 789.5h1M580 789.5h1M755 789.5h1M929 789.5h1M1104 789.5h1M1279 789.5h1M1454 789.5h1M1629 789.5h1M230 781.5h1M405 781.5h1M580 781.5h1M755 781.5h1M929 781.5h1M1104 781.5h1M1279 781.5h1M1454 781.5h1M1629 781.5h1M230 778.5h1M405 778.5h1M580 778.5h1M755 778.5h1M929 778.5h1M1104 778.5h1M1279 778.5h1M1454 778.5h1M1629 778.5h1M230 774.5h1M405 774.5h1M580 774.5h1M755 774.5h1M929 774.5h1M1104 774.5h1M1279 774.5h1M1454 774.5h1M1629 774.5h1M230 770.5h1M405 770.5h1M580 770.5h1M755 770.5h1M929 770.5h1M1104 770.5h1M1279 770.5h1M1454 770.5h1M1629 770.5h1M230 766.5h1M405 766.5h1M580 766.5h1M755 766.5h1M929 766.5h1M1104 766.5h1M1279 766.5h1M1454 766.5h1M1629 766.5h1M230 763.5h1M405 763.5h1M580 763.5h1M755 763.5h1M929 763.5h1M1104 763.5h1M1279 763.5h1M1454 763.5h1M1629 763.5h1M230 759.5h1M405 759.5h1M580 759.5h1M755 759.5h1M929 759.5h1M1104 759.5h1M1279 759.5h1M1454 759.5h1M1629 759.5h1M230 755.5h1M405 755.5h1M580 755.5h1M755 755.5h1M929 755.5h1M1104 755.5h1M1279 755.5h1M1454 755.5h1M1629 755.5h1M230 752.5h1M405 752.5h1M580 752.5h1M755 752.5h1M929 752.5h1M1104 752.5h1M1279 752.5h1M1454 752.5h1M1629 752.5h1M230 748.5h1M405 748.5h1M580 748.5h1M755 748.5h1M929 748.5h1M1104 748.5h1M1279 748.5h1M1454 748.5h1M1629 748.5h1M230 744.5h1M405 744.5h1M580 744.5h1M755 744.5h1M929 744.5h1M1104 744.5h1M1279 744.5h1M1454 744.5h1M1629 744.5h1M230 740.5h1M405 740.5h1M580 740.5h1M755 740.5h1M929 740.5h1M1104 740.5h1M1279 740.5h1M1454 740.5h1M1629 740.5h1M230 737.5h1M405 737.5h1M580 737.5h1M755 737.5h1M929 737.5h1M1104 737.5h1M1279 737.5h1M1454 737.5h1M1629 737.5h1M230 733.5h1M405 733.5h1M580 733.5h1M755 733.5h1M929 733.5h1M1104 733.5h1M1279 733.5h1M1454 733.5h1M1629 733.5h1M230 729.5h1M405 729.5h1M580 729.5h1M755 729.5h1M929 729.5h1M1104 729.5h1M1279 729.5h1M1454 729.5h1M1629 729.5h1M230 726.5h1M405 726.5h1M580 726.5h1M755 726.5h1M929 726.5h1M1104 726.5h1M1279 726.5h1M1454 726.5h1M1629 726.5h1M230 722.5h1M405 722.5h1M580 722.5h1M755 722.5h1M929 722.5h1M1104 722.5h1M1279 722.5h1M1454 722.5h1M1629 722.5h1M230 718.5h1M405 718.5h1M580 718.5h1M755 718.5h1M929 718.5h1M1104 718.5h1M1279 718.5h1M1454 718.5h1M1629 718.5h1M230 715.5h1M405 715.5h1M580 715.5h1M755 715.5h1M929 715.5h1M1104 715.5h1M1279 715.5h1M1454 715.5h1M1629 715.5h1M230 711.5h1M405 711.5h1M580 711.5h1M755 711.5h1M929 711.5h1M1104 711.5h1M1279 711.5h1M1454 711.5h1M1629 711.5h1M230 707.5h1M405 707.5h1M580 707.5h1M755 707.5h1M929 707.5h1M1104 707.5h1M1279 707.5h1M1454 707.5h1M1629 707.5h1M230 703.5h1M405 703.5h1M580 703.5h1M755 703.5h1M929 703.5h1M1104 703.5h1M1279 703.5h1M1454 703.5h1M1629 703.5h1M230 700.5h1M405 700.5h1M580 700.5h1M755 700.5h1M929 700.5h1M1104 700.5h1M1279 700.5h1M1454 700.5h1M1629 700.5h1M230 696.5h1M405 696.5h1M580 696.5h1M755 696.5h1M929 696.5h1M1104 696.5h1M1279 696.5h1M1454 696.5h1M1629 696.5h1M230 692.5h1M405 692.5h1M580 692.5h1M755 692.5h1M929 692.5h1M1104 692.5h1M1279 692.5h1M1454 692.5h1M1629 692.5h1M230 689.5h1M405 689.5h1M580 689.5h1M755 689.5h1M929 689.5h1M1104 689.5h1M1279 689.5h1M1454 689.5h1M1629 689.5h1M230 685.5h1M405 685.5h1M580 685.5h1M755 685.5h1M929 685.5h1M1104 685.5h1M1279 685.5h1M1454 685.5h1M1629 685.5h1M230 681.5h1M405 681.5h1M580 681.5h1M755 681.5h1M929 681.5h1M1104 681.5h1M1279 681.5h1M1454 681.5h1M1629 681.5h1M230 677.5h1M405 677.5h1M580 677.5h1M755 677.5h1M929 677.5h1M1104 677.5h1M1279 677.5h1M1454 677.5h1M1629 677.5h1M230 674.5h1M405 674.5h1M580 674.5h1M755 674.5h1M929 674.5h1M1104 674.5h1M1279 674.5h1M1454 674.5h1M1629 674.5h1M230 670.5h1M405 670.5h1M580 670.5h1M755 670.5h1M929 670.5h1M1104 670.5h1M1279 670.5h1M1454 670.5h1M1629 670.5h1M230 666.5h1M405 666.5h1M580 666.5h1M755 666.5h1M929 666.5h1M1104 666.5h1M1279 666.5h1M1454 666.5h1M1629 666.5h1M230 663.5h1M405 663.5h1M580 663.5h1M755 663.5h1M929 663.5h1M1104 663.5h1M1279 663.5h1M1454 663.5h1M1629 663.5h1M230 659.5h1M405 659.5h1M580 659.5h1M755 659.5h1M929 659.5h1M1104 659.5h1M1279 659.5h1M1454 659.5h1M1629 659.5h1M230 655.5h1M405 655.5h1M580 655.5h1M755 655.5h1M929 655.5h1M1104 655.5h1M1279 655.5h1M1454 655.5h1M1629 655.5h1M230 651.5h1M405 651.5h1M580 651.5h1M755 651.5h1M929 651.5h1M1104 651.5h1M1279 651.5h1M1454 651.5h1M1629 651.5h1M230 648.5h1M405 648.5h1M580 648.5h1M755 648.5h1M929 648.5h1M1104 648.5h1M1279 648.5h1M1454 648.5h1M1629 648.5h1M230 644.5h1M405 644.5h1M580 644.5h1M755 644.5h1M929 644.5h1M1104 644.5h1M1279 644.5h1M1454 644.5h1M1629 644.5h1M230 640.5h1M405 640.5h1M580 640.5h1M755 640.5h1M929 640.5h1M1104 640.5h1M1279 640.5h1M1454 640.5h1M1629 640.5h1M230 637.5h1M405 637.5h1M580 637.5h1M755 637.5h1M929 637.5h1M1104 637.5h1M1279 637.5h1M1454 637.5h1M1629 637.5h1M230 633.5h1M405 633.5h1M580 633.5h1M755 633.5h1M929 633.5h1M1104 633.5h1M1279 633.5h1M1454 633.5h1M1629 633.5h1M230 629.5h1M405 629.5h1M580 629.5h1M755 629.5h1M929 629.5h1M1104 629.5h1M1279 629.5h1M1454 629.5h1M1629 629.5h1M230 625.5h1M405 625.5h1M580 625.5h1M755 625.5h1M929 625.5h1M1104 625.5h1M1279 625.5h1M1454 625.5h1M1629 625.5h1M230 622.5h1M405 622.5h1M580 622.5h1M755 622.5h1M929 622.5h1M1104 622.5h1M1279 622.5h1M1454 622.5h1M1629 622.5h1M230 618.5h1M405 618.5h1M580 618.5h1M755 618.5h1M929 618.5h1M1104 618.5h1M1279 618.5h1M1454 618.5h1M1629 618.5h1M195 978.5h1M160 978.5h1M125 978.5h1M90 978.5h1M20 978.5h1M265 978.5h1M300 978.5h1M335 978.5h1M370 978.5h1M440 978.5h1M475 978.5h1M510 978.5h1M545 978.5h1M615 978.5h1M650 978.5h1M685 978.5h1M720 978.5h1M790 978.5h1M825 978.5h1M860 978.5h1M895 978.5h1M964 978.5h1M999 978.5h1M1034 978.5h1M1069 978.5h1M1139 978.5h1M1174 978.5h1M1209 978.5h1M1244 978.5h1M1314 978.5h1M1349 978.5h1M1384 978.5h1M1419 978.5h1M1489 978.5h1M1524 978.5h1M1559 978.5h1M1594 978.5h1M1664 978.5h1M1699 978.5h1M1734 978.5h1M1769 978.5h1M195 940.5h1M160 940.5h1M125 940.5h1M90 940.5h1M20 940.5h1M265 940.5h1M300 940.5h1M335 940.5h1M370 940.5h1M440 940.5h1M475 940.5h1M510 940.5h1M545 940.5h1M615 940.5h1M650 940.5h1M685 940.5h1M720 940.5h1M790 940.5h1M825 940.5h1M860 940.5h1M895 940.5h1M964 940.5h1M999 940.5h1M1034 940.5h1M1069 940.5h1M1139 940.5h1M1174 940.5h1M1209 940.5h1M1244 940.5h1M1314 940.5h1M1349 940.5h1M1384 940.5h1M1419 940.5h1M1489 940.5h1M1524 940.5h1M1559 940.5h1M1594 940.5h1M1664 940.5h1M1699 940.5h1M1734 940.5h1M1769 940.5h1M195 921.5h1M160 921.5h1M125 921.5h1M90 921.5h1M20 921.5h1M265 921.5h1M300 921.5h1M335 921.5h1M370 921.5h1M440 921.5h1M475 921.5h1M510 921.5h1M545 921.5h1M615 921.5h1M650 921.5h1M685 921.5h1M720 921.5h1M790 921.5h1M825 921.5h1M860 921.5h1M895 921.5h1M964 921.5h1M999 921.5h1M1034 921.5h1M1069 921.5h1M1139 921.5h1M1174 921.5h1M1209 921.5h1M1244 921.5h1M1314 921.5h1M1349 921.5h1M1384 921.5h1M1419 921.5h1M1489 921.5h1M1524 921.5h1M1559 921.5h1M1594 921.5h1M1664 921.5h1M1699 921.5h1M1734 921.5h1M1769 921.5h1M195 903.5h1M160 903.5h1M125 903.5h1M90 903.5h1M20 903.5h1M265 903.5h1M300 903.5h1M335 903.5h1M370 903.5h1M440 903.5h1M475 903.5h1M510 903.5h1M545 903.5h1M615 903.5h1M650 903.5h1M685 903.5h1M720 903.5h1M790 903.5h1M825 903.5h1M860 903.5h1M895 903.5h1M964 903.5h1M999 903.5h1M1034 903.5h1M1069 903.5h1M1139 903.5h1M1174 903.5h1M1209 903.5h1M1244 903.5h1M1314 903.5h1M1349 903.5h1M1384 903.5h1M1419 903.5h1M1489 903.5h1M1524 903.5h1M1559 903.5h1M1594 903.5h1M1664 903.5h1M1699 903.5h1M1734 903.5h1M1769 903.5h1M195 884.5h1M160 884.5h1M125 884.5h1M90 884.5h1M20 884.5h1M265 884.5h1M300 884.5h1M335 884.5h1M370 884.5h1M440 884.5h1M475 884.5h1M510 884.5h1M545 884.5h1M615 884.5h1M650 884.5h1M685 884.5h1M720 884.5h1M790 884.5h1M825 884.5h1M860 884.5h1M895 884.5h1M964 884.5h1M999 884.5h1M1034 884.5h1M1069 884.5h1M1139 884.5h1M1174 884.5h1M1209 884.5h1M1244 884.5h1M1314 884.5h1M1349 884.5h1M1384 884.5h1M1419 884.5h1M1489 884.5h1M1524 884.5h1M1559 884.5h1M1594 884.5h1M1664 884.5h1M1699 884.5h1M1734 884.5h1M1769 884.5h1M195 865.5h1M160 865.5h1M125 865.5h1M90 865.5h1M20 865.5h1M265 865.5h1M300 865.5h1M335 865.5h1M370 865.5h1M440 865.5h1M475 865.5h1M510 865.5h1M545 865.5h1M615 865.5h1M650 865.5h1M685 865.5h1M720 865.5h1M790 865.5h1M825 865.5h1M860 865.5h1M895 865.5h1M964 865.5h1M999 865.5h1M1034 865.5h1M1069 865.5h1M1139 865.5h1M1174 865.5h1M1209 865.5h1M1244 865.5h1M1314 865.5h1M1349 865.5h1M1384 865.5h1M1419 865.5h1M1489 865.5h1M1524 865.5h1M1559 865.5h1M1594 865.5h1M1664 865.5h1M1699 865.5h1M1734 865.5h1M1769 865.5h1M195 846.5h1M160 846.5h1M125 846.5h1M90 846.5h1M20 846.5h1M265 846.5h1M300 846.5h1M335 846.5h1M370 846.5h1M440 846.5h1M475 846.5h1M510 846.5h1M545 846.5h1M615 846.5h1M650 846.5h1M685 846.5h1M720 846.5h1M790 846.5h1M825 846.5h1M860 846.5h1M895 846.5h1M964 846.5h1M999 846.5h1M1034 846.5h1M1069 846.5h1M1139 846.5h1M1174 846.5h1M1209 846.5h1M1244 846.5h1M1314 846.5h1M1349 846.5h1M1384 846.5h1M1419 846.5h1M1489 846.5h1M1524 846.5h1M1559 846.5h1M1594 846.5h1M1664 846.5h1M1699 846.5h1M1734 846.5h1M1769 846.5h1M195 828.5h1M160 828.5h1M125 828.5h1M90 828.5h1M20 828.5h1M265 828.5h1M300 828.5h1M335 828.5h1M370 828.5h1M440 828.5h1M475 828.5h1M510 828.5h1M545 828.5h1M615 828.5h1M650 828.5h1M685 828.5h1M720 828.5h1M790 828.5h1M825 828.5h1M860 828.5h1M895 828.5h1M964 828.5h1M999 828.5h1M1034 828.5h1M1069 828.5h1M1139 828.5h1M1174 828.5h1M1209 828.5h1M1244 828.5h1M1314 828.5h1M1349 828.5h1M1384 828.5h1M1419 828.5h1M1489 828.5h1M1524 828.5h1M1559 828.5h1M1594 828.5h1M1664 828.5h1M1699 828.5h1M1734 828.5h1M1769 828.5h1M195 809.5h1M160 809.5h1M125 809.5h1M90 809.5h1M20 809.5h1M265 809.5h1M300 809.5h1M335 809.5h1M370 809.5h1M440 809.5h1M475 809.5h1M510 809.5h1M545 809.5h1M615 809.5h1M650 809.5h1M685 809.5h1M720 809.5h1M790 809.5h1M825 809.5h1M860 809.5h1M895 809.5h1M964 809.5h1M999 809.5h1M1034 809.5h1M1069 809.5h1M1139 809.5h1M1174 809.5h1M1209 809.5h1M1244 809.5h1M1314 809.5h1M1349 809.5h1M1384 809.5h1M1419 809.5h1M1489 809.5h1M1524 809.5h1M1559 809.5h1M1594 809.5h1M1664 809.5h1M1699 809.5h1M1734 809.5h1M1769 809.5h1M230 989.5h1M405 989.5h1M580 989.5h1M755 989.5h1M929 989.5h1M1104 989.5h1M1279 989.5h1M1454 989.5h1M1629 989.5h1M230 985.5h1M405 985.5h1M580 985.5h1M755 985.5h1M929 985.5h1M1104 985.5h1M1279 985.5h1M1454 985.5h1M1629 985.5h1M230 982.5h1M405 982.5h1M580 982.5h1M755 982.5h1M929 982.5h1M1104 982.5h1M1279 982.5h1M1454 982.5h1M1629 982.5h1M230 978.5h1M405 978.5h1M580 978.5h1M755 978.5h1M929 978.5h1M1104 978.5h1M1279 978.5h1M1454 978.5h1M1629 978.5h1M230 974.5h1M405 974.5h1M580 974.5h1M755 974.5h1M929 974.5h1M1104 974.5h1M1279 974.5h1M1454 974.5h1M1629 974.5h1M230 970.5h1M405 970.5h1M580 970.5h1M755 970.5h1M929 970.5h1M1104 970.5h1M1279 970.5h1M1454 970.5h1M1629 970.5h1M230 967.5h1M405 967.5h1M580 967.5h1M755 967.5h1M929 967.5h1M1104 967.5h1M1279 967.5h1M1454 967.5h1M1629 967.5h1M230 963.5h1M405 963.5h1M580 963.5h1M755 963.5h1M929 963.5h1M1104 963.5h1M1279 963.5h1M1454 963.5h1M1629 963.5h1M230 955.5h1M405 955.5h1M580 955.5h1M755 955.5h1M929 955.5h1M1104 955.5h1M1279 955.5h1M1454 955.5h1M1629 955.5h1M230 951.5h1M405 951.5h1M580 951.5h1M755 951.5h1M929 951.5h1M1104 951.5h1M1279 951.5h1M1454 951.5h1M1629 951.5h1M230 948.5h1M405 948.5h1M580 948.5h1M755 948.5h1M929 948.5h1M1104 948.5h1M1279 948.5h1M1454 948.5h1M1629 948.5h1M230 944.5h1M405 944.5h1M580 944.5h1M755 944.5h1M929 944.5h1M1104 944.5h1M1279 944.5h1M1454 944.5h1M1629 944.5h1M230 940.5h1M405 940.5h1M580 940.5h1M755 940.5h1M929 940.5h1M1104 940.5h1M1279 940.5h1M1454 940.5h1M1629 940.5h1M230 936.5h1M405 936.5h1M580 936.5h1M755 936.5h1M929 936.5h1M1104 936.5h1M1279 936.5h1M1454 936.5h1M1629 936.5h1M230 933.5h1M405 933.5h1M580 933.5h1M755 933.5h1M929 933.5h1M1104 933.5h1M1279 933.5h1M1454 933.5h1M1629 933.5h1M230 929.5h1M405 929.5h1M580 929.5h1M755 929.5h1M929 929.5h1M1104 929.5h1M1279 929.5h1M1454 929.5h1M1629 929.5h1M230 925.5h1M405 925.5h1M580 925.5h1M755 925.5h1M929 925.5h1M1104 925.5h1M1279 925.5h1M1454 925.5h1M1629 925.5h1M230 921.5h1M405 921.5h1M580 921.5h1M755 921.5h1M929 921.5h1M1104 921.5h1M1279 921.5h1M1454 921.5h1M1629 921.5h1M230 918.5h1M405 918.5h1M580 918.5h1M755 918.5h1M929 918.5h1M1104 918.5h1M1279 918.5h1M1454 918.5h1M1629 918.5h1M230 914.5h1M405 914.5h1M580 914.5h1M755 914.5h1M929 914.5h1M1104 914.5h1M1279 914.5h1M1454 914.5h1M1629 914.5h1M230 910.5h1M405 910.5h1M580 910.5h1M755 910.5h1M929 910.5h1M1104 910.5h1M1279 910.5h1M1454 910.5h1M1629 910.5h1M230 906.5h1M405 906.5h1M580 906.5h1M755 906.5h1M929 906.5h1M1104 906.5h1M1279 906.5h1M1454 906.5h1M1629 906.5h1M230 903.5h1M405 903.5h1M580 903.5h1M755 903.5h1M929 903.5h1M1104 903.5h1M1279 903.5h1M1454 903.5h1M1629 903.5h1M230 899.5h1M405 899.5h1M580 899.5h1M755 899.5h1M929 899.5h1M1104 899.5h1M1279 899.5h1M1454 899.5h1M1629 899.5h1M230 895.5h1M405 895.5h1M580 895.5h1M755 895.5h1M929 895.5h1M1104 895.5h1M1279 895.5h1M1454 895.5h1M1629 895.5h1M230 891.5h1M405 891.5h1M580 891.5h1M755 891.5h1M929 891.5h1M1104 891.5h1M1279 891.5h1M1454 891.5h1M1629 891.5h1M230 888.5h1M405 888.5h1M580 888.5h1M755 888.5h1M929 888.5h1M1104 888.5h1M1279 888.5h1M1454 888.5h1M1629 888.5h1M230 884.5h1M405 884.5h1M580 884.5h1M755 884.5h1M929 884.5h1M1104 884.5h1M1279 884.5h1M1454 884.5h1M1629 884.5h1M230 880.5h1M405 880.5h1M580 880.5h1M755 880.5h1M929 880.5h1M1104 880.5h1M1279 880.5h1M1454 880.5h1M1629 880.5h1M230 876.5h1M405 876.5h1M580 876.5h1M755 876.5h1M929 876.5h1M1104 876.5h1M1279 876.5h1M1454 876.5h1M1629 876.5h1M230 873.5h1M405 873.5h1M580 873.5h1M755 873.5h1M929 873.5h1M1104 873.5h1M1279 873.5h1M1454 873.5h1M1629 873.5h1M230 869.5h1M405 869.5h1M580 869.5h1M755 869.5h1M929 869.5h1M1104 869.5h1M1279 869.5h1M1454 869.5h1M1629 869.5h1M230 865.5h1M405 865.5h1M580 865.5h1M755 865.5h1M929 865.5h1M1104 865.5h1M1279 865.5h1M1454 865.5h1M1629 865.5h1M230 861.5h1M405 861.5h1M580 861.5h1M755 861.5h1M929 861.5h1M1104 861.5h1M1279 861.5h1M1454 861.5h1M1629 861.5h1M230 858.5h1M405 858.5h1M580 858.5h1M755 858.5h1M929 858.5h1M1104 858.5h1M1279 858.5h1M1454 858.5h1M1629 858.5h1M230 854.5h1M405 854.5h1M580 854.5h1M755 854.5h1M929 854.5h1M1104 854.5h1M1279 854.5h1M1454 854.5h1M1629 854.5h1M230 850.5h1M405 850.5h1M580 850.5h1M755 850.5h1M929 850.5h1M1104 850.5h1M1279 850.5h1M1454 850.5h1M1629 850.5h1M230 846.5h1M405 846.5h1M580 846.5h1M755 846.5h1M929 846.5h1M1104 846.5h1M1279 846.5h1M1454 846.5h1M1629 846.5h1M230 843.5h1M405 843.5h1M580 843.5h1M755 843.5h1M929 843.5h1M1104 843.5h1M1279 843.5h1M1454 843.5h1M1629 843.5h1M230 839.5h1M405 839.5h1M580 839.5h1M755 839.5h1M929 839.5h1M1104 839.5h1M1279 839.5h1M1454 839.5h1M1629 839.5h1M230 835.5h1M405 835.5h1M580 835.5h1M755 835.5h1M929 835.5h1M1104 835.5h1M1279 835.5h1M1454 835.5h1M1629 835.5h1M230 831.5h1M405 831.5h1M580 831.5h1M755 831.5h1M929 831.5h1M1104 831.5h1M1279 831.5h1M1454 831.5h1M1629 831.5h1M230 828.5h1M405 828.5h1M580 828.5h1M755 828.5h1M929 828.5h1M1104 828.5h1M1279 828.5h1M1454 828.5h1M1629 828.5h1M230 824.5h1M405 824.5h1M580 824.5h1M755 824.5h1M929 824.5h1M1104 824.5h1M1279 824.5h1M1454 824.5h1M1629 824.5h1M230 820.5h1M405 820.5h1M580 820.5h1M755 820.5h1M929 820.5h1M1104 820.5h1M1279 820.5h1M1454 820.5h1M1629 820.5h1M230 816.5h1M405 816.5h1M580 816.5h1M755 816.5h1M929 816.5h1M1104 816.5h1M1279 816.5h1M1454 816.5h1M1629 816.5h1M230 813.5h1M405 813.5h1M580 813.5h1M755 813.5h1M929 813.5h1M1104 813.5h1M1279 813.5h1M1454 813.5h1M1629 813.5h1M230 809.5h1M405 809.5h1M580 809.5h1M755 809.5h1M929 809.5h1M1104 809.5h1M1279 809.5h1M1454 809.5h1M1629 809.5h1M230 805.5h1M405 805.5h1M580 805.5h1M755 805.5h1M929 805.5h1M1104 805.5h1M1279 805.5h1M1454 805.5h1M1629 805.5h1" stroke="#c4c4c4" stroke-width="1" fill="none"/><path d="M55.5 57V992" stroke="#d4d4d4" stroke-width="1" stroke-dasharray="5 5" stroke-dashoffset="5" fill="none"/><path d="M3 224.5H1751M3 355.5H1751M3 524.5H1751M3 785.5H1751M3 959.5H1751" stroke="#d4d4d4" stroke-width="1" stroke-dasharray="5 5" fill="none"/><path d="M3 243H1751M3 430H1751M3 617H1751M3 804H1751" stroke="#7c7c7c" stroke-width="2" fill="none"/><path d="M3 56.5H1751" stroke="#6a6a6a" stroke-width="1" fill="none"/></svg><div class="a" style="right:169.0px;top:87.0px;height:16px;line-height:16px;font-size:12.5px;letter-spacing:0.5px;color:#e6dc1e;background:#000;padding-left:8px;padding-right:5.2px">35 V</div><div class="a" style="right:169.0px;top:105.3px;height:16px;line-height:16px;font-size:12.5px;letter-spacing:0.5px;color:#e6dc1e;background:#000;padding-left:8px;padding-right:5.2px">30 V</div><div class="a" style="right:169.0px;top:123.7px;height:16px;line-height:16px;font-size:12.5px;letter-spacing:0.5px;color:#e6dc1e;background:#000;padding-left:8px;padding-right:5.2px">25 V</div><div class="a" style="right:169.0px;top:142.1px;height:16px;line-height:16px;font-size:12.5px;letter-spacing:0.5px;color:#e6dc1e;background:#000;padding-left:8px;padding-right:5.2px">20 V</div><div class="a" style="right:169.0px;top:160.4px;height:16px;line-height:16px;font-size:12.5px;letter-spacing:0.5px;color:#e6dc1e;background:#000;padding-left:8px;padding-right:5.2px">15 V</div><div class="a" style="right:169.0px;top:178.8px;height:16px;line-height:16px;font-size:12.5px;letter-spacing:0.5px;color:#e6dc1e;background:#000;padding-left:8px;padding-right:5.2px">10 V</div><div class="a" style="right:169.0px;top:197.1px;height:16px;line-height:16px;font-size:12.5px;letter-spacing:0.5px;color:#e6dc1e;background:#000;padding-left:8px;padding-right:5.2px">5 V</div><div class="a" style="right:169.0px;top:215.5px;height:16px;line-height:16px;font-size:12.5px;letter-spacing:0.5px;color:#e6dc1e;background:#000;padding-left:8px;padding-right:5.2px">0 V</div><div class="a" style="right:169.0px;top:68.6px;height:16px;line-height:16px;font-size:12.5px;letter-spacing:0.5px;color:#e6dc1e;background:#000;padding-left:8px;padding-right:3.2px">40 V</div><div class="a" style="right:169.0px;top:256.1px;height:16px;line-height:16px;font-size:12.5px;letter-spacing:0.5px;color:#8cc43a;background:#000;padding-left:8px;padding-right:5.2px">1 V</div><div class="a" style="right:169.0px;top:274.4px;height:16px;line-height:16px;font-size:12.5px;letter-spacing:0.5px;color:#8cc43a;background:#000;padding-left:8px;padding-right:5.2px">800 mV</div><div class="a" style="right:169.0px;top:292.8px;height:16px;line-height:16px;font-size:12.5px;letter-spacing:0.5px;color:#8cc43a;background:#000;padding-left:8px;padding-right:5.2px">600 mV</div><div class="a" style="right:169.0px;top:311.1px;height:16px;line-height:16px;font-size:12.5px;letter-spacing:0.5px;color:#8cc43a;background:#000;padding-left:8px;padding-right:5.2px">400 mV</div><div class="a" style="right:169.0px;top:329.4px;height:16px;line-height:16px;font-size:12.5px;letter-spacing:0.5px;color:#8cc43a;background:#000;padding-left:8px;padding-right:5.2px">200 mV</div><div class="a" style="right:169.0px;top:347.8px;height:16px;line-height:16px;font-size:12.5px;letter-spacing:0.5px;color:#8cc43a;background:#000;padding-left:8px;padding-right:5.2px">0 V</div><div class="a" style="right:169.0px;top:366.2px;height:16px;line-height:16px;font-size:12.5px;letter-spacing:0.5px;color:#8cc43a;background:#000;padding-left:8px;padding-right:5.2px">-200 mV</div><div class="a" style="right:169.0px;top:384.5px;height:16px;line-height:16px;font-size:12.5px;letter-spacing:0.5px;color:#8cc43a;background:#000;padding-left:8px;padding-right:5.2px">-400 mV</div><div class="a" style="right:169.0px;top:402.9px;height:16px;line-height:16px;font-size:12.5px;letter-spacing:0.5px;color:#8cc43a;background:#000;padding-left:8px;padding-right:5.2px">-600 mV</div><div class="a" style="right:169.0px;top:441.5px;height:16px;line-height:16px;font-size:12.5px;letter-spacing:0.5px;color:#ee9326;background:#000;padding-left:8px;padding-right:5.2px">4 V</div><div class="a" style="right:169.0px;top:460.1px;height:16px;line-height:16px;font-size:12.5px;letter-spacing:0.5px;color:#ee9326;background:#000;padding-left:8px;padding-right:5.2px">3 V</div><div class="a" style="right:169.0px;top:478.6px;height:16px;line-height:16px;font-size:12.5px;letter-spacing:0.5px;color:#ee9326;background:#000;padding-left:8px;padding-right:5.2px">2 V</div><div class="a" style="right:169.0px;top:497.1px;height:16px;line-height:16px;font-size:12.5px;letter-spacing:0.5px;color:#ee9326;background:#000;padding-left:8px;padding-right:5.2px">1 V</div><div class="a" style="right:169.0px;top:515.7px;height:16px;line-height:16px;font-size:12.5px;letter-spacing:0.5px;color:#ee9326;background:#000;padding-left:8px;padding-right:5.2px">0 V</div><div class="a" style="right:169.0px;top:534.2px;height:16px;line-height:16px;font-size:12.5px;letter-spacing:0.5px;color:#ee9326;background:#000;padding-left:8px;padding-right:5.2px">-1 V</div><div class="a" style="right:169.0px;top:552.8px;height:16px;line-height:16px;font-size:12.5px;letter-spacing:0.5px;color:#ee9326;background:#000;padding-left:8px;padding-right:5.2px">-2 V</div><div class="a" style="right:169.0px;top:571.3px;height:16px;line-height:16px;font-size:12.5px;letter-spacing:0.5px;color:#ee9326;background:#000;padding-left:8px;padding-right:5.2px">-3 V</div><div class="a" style="right:169.0px;top:589.9px;height:16px;line-height:16px;font-size:12.5px;letter-spacing:0.5px;color:#ee9326;background:#000;padding-left:8px;padding-right:5.2px">-4 V</div><div class="a" style="right:169.0px;top:629.0px;height:16px;line-height:16px;font-size:12.5px;letter-spacing:0.5px;color:#e8902a;background:#000;padding-left:8px;padding-right:5.2px">528.516 mT</div><div class="a" style="right:169.0px;top:647.5px;height:16px;line-height:16px;font-size:12.5px;letter-spacing:0.5px;color:#e8902a;background:#000;padding-left:8px;padding-right:5.2px">462.451 mT</div><div class="a" style="right:169.0px;top:666.1px;height:16px;line-height:16px;font-size:12.5px;letter-spacing:0.5px;color:#e8902a;background:#000;padding-left:8px;padding-right:5.2px">396.387 mT</div><div class="a" style="right:169.0px;top:684.6px;height:16px;line-height:16px;font-size:12.5px;letter-spacing:0.5px;color:#e8902a;background:#000;padding-left:8px;padding-right:5.2px">330.322 mT</div><div class="a" style="right:169.0px;top:703.1px;height:16px;line-height:16px;font-size:12.5px;letter-spacing:0.5px;color:#e8902a;background:#000;padding-left:8px;padding-right:5.2px">264.258 mT</div><div class="a" style="right:169.0px;top:721.7px;height:16px;line-height:16px;font-size:12.5px;letter-spacing:0.5px;color:#e8902a;background:#000;padding-left:8px;padding-right:5.2px">198.193 mT</div><div class="a" style="right:169.0px;top:740.2px;height:16px;line-height:16px;font-size:12.5px;letter-spacing:0.5px;color:#e8902a;background:#000;padding-left:8px;padding-right:5.2px">132.129 mT</div><div class="a" style="right:169.0px;top:758.8px;height:16px;line-height:16px;font-size:12.5px;letter-spacing:0.5px;color:#e8902a;background:#000;padding-left:8px;padding-right:5.2px">66.064 mT</div><div class="a" style="right:169.0px;top:777.3px;height:16px;line-height:16px;font-size:12.5px;letter-spacing:0.5px;color:#e8902a;background:#000;padding-left:8px;padding-right:5.2px">0 T</div><div class="a" style="right:169.0px;top:821.2px;height:16px;line-height:16px;font-size:12.5px;letter-spacing:0.5px;color:#7e3a9c;background:#000;padding-left:8px;padding-right:5.2px">2.058238 kA</div><div class="a" style="right:169.0px;top:839.9px;height:16px;line-height:16px;font-size:12.5px;letter-spacing:0.5px;color:#7e3a9c;background:#000;padding-left:8px;padding-right:5.2px">1.764204 kA</div><div class="a" style="right:169.0px;top:858.5px;height:16px;line-height:16px;font-size:12.5px;letter-spacing:0.5px;color:#7e3a9c;background:#000;padding-left:8px;padding-right:5.2px">1.470170 kA</div><div class="a" style="right:169.0px;top:877.1px;height:16px;line-height:16px;font-size:12.5px;letter-spacing:0.5px;color:#7e3a9c;background:#000;padding-left:8px;padding-right:5.2px">1.176136 kA</div><div class="a" style="right:169.0px;top:895.8px;height:16px;line-height:16px;font-size:12.5px;letter-spacing:0.5px;color:#7e3a9c;background:#000;padding-left:8px;padding-right:5.2px">882.102 A</div><div class="a" style="right:169.0px;top:914.4px;height:16px;line-height:16px;font-size:12.5px;letter-spacing:0.5px;color:#7e3a9c;background:#000;padding-left:8px;padding-right:5.2px">588.068 A</div><div class="a" style="right:169.0px;top:933.1px;height:16px;line-height:16px;font-size:12.5px;letter-spacing:0.5px;color:#7e3a9c;background:#000;padding-left:8px;padding-right:5.2px">294.034 A</div><div class="a" style="right:169.0px;top:951.7px;height:16px;line-height:16px;font-size:12.5px;letter-spacing:0.5px;color:#7e3a9c;background:#000;padding-left:8px;padding-right:5.2px">0 A</div><div class="a" style="right:169.0px;top:970.3px;height:16px;line-height:16px;font-size:12.5px;letter-spacing:0.5px;color:#7e3a9c;background:#000;padding-left:8px;padding-right:5.2px">-294.034 A</div><div class="a" style="left:-5px;width:120px;text-align:center;top:974.2px;height:16px;line-height:16px;font-size:13px;color:#cfcfcf">0 s</div><div class="a" style="left:170px;width:120px;text-align:center;top:974.2px;height:16px;line-height:16px;font-size:13px;color:#cfcfcf">2.4 ms</div><div class="a" style="left:345px;width:120px;text-align:center;top:974.2px;height:16px;line-height:16px;font-size:13px;color:#cfcfcf">4.8 ms</div><div class="a" style="left:520px;width:120px;text-align:center;top:974.2px;height:16px;line-height:16px;font-size:13px;color:#cfcfcf">7.2 ms</div><div class="a" style="left:695px;width:120px;text-align:center;top:974.2px;height:16px;line-height:16px;font-size:13px;color:#cfcfcf">9.6 ms</div><div class="a" style="left:870px;width:120px;text-align:center;top:974.2px;height:16px;line-height:16px;font-size:13px;color:#cfcfcf">12 ms</div><div class="a" style="left:1045px;width:120px;text-align:center;top:974.2px;height:16px;line-height:16px;font-size:13px;color:#cfcfcf">14.4 ms</div><div class="a" style="left:1220px;width:120px;text-align:center;top:974.2px;height:16px;line-height:16px;font-size:13px;color:#cfcfcf">16.8 ms</div><div class="a" style="left:1395px;width:120px;text-align:center;top:974.2px;height:16px;line-height:16px;font-size:13px;color:#cfcfcf">19.2 ms</div><div class="a" style="left:1570px;width:120px;text-align:center;top:974.2px;height:16px;line-height:16px;font-size:13px;color:#cfcfcf">21.6 ms</div><div class="a" style="left:54px;top:135.5px;height:24px;line-height:24px;font-size:19px;letter-spacing:0.35px;color:#ecdf22">U_loop,coil</div><div class="a" style="left:54px;top:322.5px;height:24px;line-height:24px;font-size:19px;letter-spacing:0.35px;color:#8cc83c">U_Photod</div><div class="a" style="left:54px;top:510.0px;height:24px;line-height:24px;font-size:19px;letter-spacing:0.35px;color:#f0962a">U_Diamagn</div><div class="a" style="left:53px;top:771.5px;height:24px;line-height:24px;font-size:18.5px;letter-spacing:-0.3px;color:#ee9326">B_t</div><div class="a" style="left:53.5px;top:946.5px;height:24px;line-height:24px;font-size:18.5px;letter-spacing:-0.5px;color:#7e3a9c">I_p</div><svg class="a" style="left:0;top:0" width="1920" height="1080" viewBox="0 0 1920 1080"><defs><clipPath id="pc"><rect x="3" y="57" width="1748" height="935"/></clipPath></defs><g clip-path="url(#pc)" fill="none" stroke-width="1.7" stroke-linejoin="round" shape-rendering="crispEdges"><polyline points="3.0,222.2 55.0,222.2 56.0,219.0 58.0,223.0 62.0,221.0 66.0,223.0 70.0,221.5 75.0,223.0 80.0,221.5 85.0,222.5 128.0,222.2 129.2,218.3 134.2,210.8 143.3,205.0 155.0,198.3 163.3,194.2 173.3,190.0 190.0,183.0 206.7,177.5 230.0,172.2 248.3,168.8 265.0,165.8 276.7,165.3 281.7,167.5 290.0,175.0 300.0,182.5 306.7,185.3 315.0,186.2 331.7,185.8 360.0,183.3 405.0,180.3 463.3,175.8 526.7,170.0 580.0,165.0 626.7,159.5 660.0,155.8 680.0,151.7 693.3,148.7 698.3,145.0 701.7,138.7 710.0,134.2 715.0,134.2 726.7,136.2 755.0,143.3 793.3,158.3 826.7,168.3 860.0,179.2 893.3,188.0 930.0,195.8 980.0,203.7 1043.0,209.2 1105.8,211.2 1193.0,214.2 1305.8,216.2 1430.8,218.3 1585.0,220.0 1751.0,221.7" stroke="#f2e61e"/><polyline points="3.0,353.3 281.0,353.3 290.0,345.0 300.0,327.5 312.5,302.5 320.0,295.0 325.0,293.8 480.0,294.5 580.0,295.5 697.5,296.5 720.0,301.2 740.0,310.0 755.0,318.8 780.0,331.2 805.0,340.0 842.5,347.0 880.0,350.8 930.0,353.0 960.0,353.4 1751.0,353.4" stroke="#8cd23a"/><polyline points="3.0,522.5 1751.0,522.5" stroke="#f39a28"/><polyline points="3.0,783.5 62.0,783.3 77.0,781.0 229.7,758.8 581.0,715.2 755.7,695.0 860.0,685.6 1104.7,666.0 1279.6,653.8 1454.5,645.8 1628.9,639.7 1751.0,636.4" stroke="#ef9426" stroke-width="1.3"/><polyline points="3.0,958.0 128.6,958.0 129.7,966.3 134.0,971.7 138.4,968.5 142.8,970.2 147.2,967.4 153.8,968.5 171.3,966.7 215.0,963.0 271.9,959.7 276.3,956.4 282.8,948.8 289.4,935.6 300.3,913.8 315.7,897.4 326.6,889.7 346.3,878.8 370.3,865.6 405.3,851.4 433.8,840.5 461.9,832.8 505.6,825.8 531.9,824.5 549.4,824.7 580.0,828.0 604.0,832.4 630.3,841.6 647.8,847.7 665.3,856.4 680.6,870.0 693.8,882.0 700.3,896.3 709.1,921.4 722.2,932.4 735.3,941.1 755.0,949.2 790.0,953.1 860.0,956.9 926.2,959.1 1031.7,960.5 1271.0,956.7 1462.9,952.8 1750.4,947.1" stroke="#7c2f9c" stroke-width="1.5"/></g></svg><svg class="a" style="left:0;top:0" width="1920" height="1080" viewBox="0 0 1920 1080"><path d="M9.2 137.25H30.5L41.6 150L30.5 162.75H9.2Q6.2 162.75 6.2 159.75V140.25Q6.2 137.25 9.2 137.25Z" fill="#1e1c08" stroke="#e8dc28" stroke-width="1.3"/><text x="15.0" y="153.2" font-size="12.3" fill="#e8dc28" font-family="Liberation Sans" letter-spacing="2.4">C1</text><path d="M9.2 324.45H30.5L41.6 337.2L30.5 349.95H9.2Q6.2 349.95 6.2 346.95V327.45Q6.2 324.45 9.2 324.45Z" fill="#161e0c" stroke="#8cc43a" stroke-width="1.3"/><text x="15.0" y="340.4" font-size="12.3" fill="#8cc43a" font-family="Liberation Sans" letter-spacing="2.4">C4</text><path d="M9.2 511.25H30.5L41.6 524L30.5 536.75H9.2Q6.2 536.75 6.2 533.75V514.25Q6.2 511.25 9.2 511.25Z" fill="#1e140a" stroke="#f0962a" stroke-width="1.3"/><text x="15.0" y="527.2" font-size="12.3" fill="#f0962a" font-family="Liberation Sans" letter-spacing="2.4">C5</text><path d="M9.2 772.25H30.5L41.6 785L30.5 797.75H9.2Q6.2 797.75 6.2 794.75V775.25Q6.2 772.25 9.2 772.25Z" fill="#1e140a" stroke="#f0962a" stroke-width="1.3"/><text x="13.2" y="788.2" font-size="12.3" fill="#f0962a" font-family="Liberation Sans" letter-spacing="2">M1</text><path d="M10 947.0H30.5L41.6 959L30.5 971.0H10Q7 971.0 7 968.0V950.0Q7 947.0 10 947.0Z" fill="#74308e" stroke="#74308e" stroke-width="1.3"/><text x="14" y="962.2" font-size="12.3" fill="#ffffff" font-family="Liberation Sans" letter-spacing="2">M2</text><path d="M45 57H65L55 66.5Z" fill="#f28c1c"/><path d="M46 68H64V87H59L55 93L51 87H46Z" fill="#000" stroke="#f28c1c" stroke-width="2"/><text x="55" y="83.5" font-size="14" font-weight="bold" fill="#f28c1c" text-anchor="middle" font-family="Liberation Sans">T</text><path d="M1712 64H1741Q1744 64 1744 67V96L1712 64Z" fill="#555555" stroke="#555555" stroke-width="2" stroke-linejoin="round"/><circle cx="1737.2" cy="71.8" r="3.9" fill="none" stroke="#9a9a9a" stroke-width="1.6"/><path d="M1734.3 74.8L1728.8 80.2" stroke="#9a9a9a" stroke-width="2.2" stroke-linecap="round"/><circle cx="1762" cy="503.5" r="2" fill="#c8c8c8"/><circle cx="1762" cy="512" r="2" fill="#c8c8c8"/><circle cx="1762" cy="520.5" r="2" fill="#c8c8c8"/></svg><svg class="a" style="left:0;top:0" width="1920" height="80" viewBox="0 0 1920 80"><path d="M593.5 36.5H586.5V52.5H593.5" fill="none" stroke="#f0f0f0" stroke-width="1"/><path d="M1160.5 36.5H1166.5V52.5H1160.5" fill="none" stroke="#f0f0f0" stroke-width="1"/><path d="M587 45H1166" stroke="#c0c0c0" stroke-width="1.6"/><path d="M596 33H610L603 38Z" fill="#f28c1c"/><path d="M597 40H609V52H605L603 56L601 52H597Z" fill="#000" stroke="#f28c1c" stroke-width="1.6"/><text x="603.3" y="50.3" font-size="10.5" font-weight="bold" fill="#f28c1c" text-anchor="middle" font-family="Liberation Sans">T</text></svg><div class="a" style="left:1769px;top:29px;width:160px;height:966px;border:1px solid #625a52;border-left-color:#5a5c5e;background:#2e2e2e"></div><div class="a" style="left:1769px;top:30px;width:151px;text-align:center;font-size:15px;line-height:18px;font-weight:bold;color:#e6e6e6">Add New...</div><div class="a" style="left:1777px;top:54px;width:63px;height:36.5px;border:1px solid #5f5750;border-radius:6px;background:linear-gradient(#3e3e3e,#2a2a2a);box-shadow:0 1px 1px #111"></div><div class="a" style="left:1777px;top:52.5px;width:63px;height:36.5px;display:flex;align-items:center;justify-content:center;text-align:center;font-size:15px;line-height:17px;color:#e2e2e2;white-space:normal">Cursors</div><div class="a" style="left:1849px;top:54px;width:63px;height:36.5px;border:1px solid #5f5750;border-radius:6px;background:linear-gradient(#3e3e3e,#2a2a2a);box-shadow:0 1px 1px #111"></div><div class="a" style="left:1849px;top:52.5px;width:63px;height:36.5px;display:flex;align-items:center;justify-content:center;text-align:center;font-size:15px;line-height:17px;color:#e2e2e2;white-space:normal">Callout</div><div class="a" style="left:1777px;top:100px;width:63px;height:36.5px;border:1px solid #5f5750;border-radius:6px;background:linear-gradient(#3e3e3e,#2a2a2a);box-shadow:0 1px 1px #111"></div><div class="a" style="left:1777px;top:98.5px;width:63px;height:36.5px;display:flex;align-items:center;justify-content:center;text-align:center;font-size:15px;line-height:17px;color:#e2e2e2;white-space:normal">Measure</div><div class="a" style="left:1849px;top:100px;width:63px;height:36.5px;border:1px solid #5f5750;border-radius:6px;background:linear-gradient(#3e3e3e,#2a2a2a);box-shadow:0 1px 1px #111"></div><div class="a" style="left:1849px;top:98.5px;width:63px;height:36.5px;display:flex;align-items:center;justify-content:center;text-align:center;font-size:15px;line-height:17px;color:#e2e2e2;white-space:normal">Search</div><div class="a" style="left:1777px;top:146px;width:63px;height:37px;border:1px solid #5f5750;border-radius:6px;background:linear-gradient(#3e3e3e,#2a2a2a);box-shadow:0 1px 1px #111"></div><div class="a" style="left:1777px;top:144.5px;width:63px;height:37px;display:flex;align-items:center;justify-content:center;text-align:center;font-size:15px;line-height:16px;color:#e2e2e2;white-space:normal">Results<br>Table</div><div class="a" style="left:1849px;top:146px;width:63px;height:36.5px;border:1px solid #5f5750;border-radius:6px;background:linear-gradient(#3e3e3e,#2a2a2a);box-shadow:0 1px 1px #111"></div><div class="a" style="left:1849px;top:144.5px;width:63px;height:36.5px;display:flex;align-items:center;justify-content:center;text-align:center;font-size:15px;line-height:17px;color:#e2e2e2;white-space:normal">Plot</div><div class="a" style="left:1773px;top:189px;width:144px;height:1px;background:#5f5750"></div><div class="a" style="left:1777px;top:196px;width:63px;height:36.5px;border:1px solid #5f5750;border-radius:6px;background:linear-gradient(#3e3e3e,#2a2a2a);box-shadow:0 1px 1px #111"></div><div class="a" style="left:1777px;top:194.5px;width:63px;height:36.5px;display:flex;align-items:center;justify-content:center;text-align:center;font-size:15px;line-height:17px;color:#e2e2e2;white-space:normal"></div><div class="a" style="left:1849px;top:196px;width:63px;height:36.5px;border:1px solid #5f5750;border-radius:6px;background:linear-gradient(#3e3e3e,#2a2a2a);box-shadow:0 1px 1px #111"></div><div class="a" style="left:1849px;top:194.5px;width:63px;height:36.5px;display:flex;align-items:center;justify-content:center;text-align:center;font-size:15px;line-height:17px;color:#e2e2e2;white-space:normal">More...</div><div class="a" style="left:1773px;top:241px;width:144px;height:1px;background:#5f5750"></div><svg class="a" style="left:1777px;top:194.5px" width="63" height="37" viewBox="0 0 63 37"><rect x="20.5" y="8.5" width="22" height="20" fill="none" stroke="#b0b0b0" stroke-width="1.6" stroke-dasharray="2.5 2"/><circle cx="32" cy="16" r="5" fill="#2f2f2f" stroke="#b8b8b8" stroke-width="1.7"/><path d="M28.5 19.5L23.5 24.5" stroke="#b8b8b8" stroke-width="2.4" stroke-linecap="round"/><path d="M35 21L42 27L39 27.5L40.5 31L39 31.5L37.5 28L35.5 30Z" fill="#b8b8b8"/></svg><svg class="a" style="left:0;top:0" width="1920" height="30" viewBox="0 0 1920 30"><text x="1785.3" y="25.7" font-family="Liberation Sans" font-weight="bold" font-size="29" fill="#ffffff" textLength="29.5" lengthAdjust="spacingAndGlyphs">Te</text><path d="M1815.6 4.2H1819.6V16L1815.6 21Z" fill="#ffffff"/><path d="M1823.5 17.5L1826.2 14.5L1831 25.7H1825.6Z" fill="#ffffff"/><path d="M1815 25.7H1820.4L1831 9.5H1825.6Z" fill="#1fb8dc"/><text x="1830.6" y="25.7" font-family="Liberation Sans" font-weight="bold" font-size="29" fill="#ffffff" textLength="72.8" lengthAdjust="spacingAndGlyphs">tronix</text></svg><div class="a" style="left:3px;top:999px;width:90px;height:80px;border-radius:5px;overflow:hidden;background:#c9c9c9"><div class="a" style="left:0;top:0;width:90px;height:18.5px;background:#4b4521"></div><div class="a" style="left:0;top:18.5px;width:90px;height:1.5px;background:#a6a6a6"></div><div class="a" style="left:6px;top:0px;font-size:15px;line-height:18px;color:#ece22a">Ch 1</div><div class="a" style="left:7px;top:21.5px;font-size:15px;line-height:19px;color:#111">5 V/div</div><div class="a" style="left:7px;top:40.8px;font-size:15px;line-height:19px;color:#111">1 M&Omega;</div><div class="a" style="left:7px;top:60.1px;font-size:15px;line-height:19px;color:#111">200 kHz</div><div class="a" style="left:73.7px;top:61.3px;font-size:9.5px;line-height:10px;color:#111">B</div><div class="a" style="left:79px;top:64.5px;font-size:10px;line-height:10px;color:#111">w</div></div><div class="a" style="left:98px;top:999px;width:90px;height:80px;border-radius:5px;overflow:hidden;background:#8c8c8c"><div class="a" style="left:0;top:0;width:90px;height:18.5px;background:#26807f"></div><div class="a" style="left:0;top:18.5px;width:90px;height:1.5px;background:#747474"></div><div class="a" style="left:6px;top:0px;font-size:15px;line-height:18px;color:#14302f">Ch 2</div><div class="a" style="left:7px;top:21.5px;font-size:15px;line-height:19px;color:#111">130 mV/div</div><div class="a" style="left:7px;top:40.8px;font-size:15px;line-height:19px;color:#111">1 M&Omega;</div><div class="a" style="left:7px;top:60.1px;font-size:15px;line-height:19px;color:#111">200 kHz</div><div class="a" style="left:73.7px;top:61.3px;font-size:9.5px;line-height:10px;color:#111">B</div><div class="a" style="left:79px;top:64.5px;font-size:10px;line-height:10px;color:#111">w</div></div><div class="a" style="left:193px;top:999px;width:90px;height:80px;border-radius:5px;overflow:hidden;background:#8c8c8c"><div class="a" style="left:0;top:0;width:90px;height:18.5px;background:#903a48"></div><div class="a" style="left:0;top:18.5px;width:90px;height:1.5px;background:#747474"></div><div class="a" style="left:6px;top:0px;font-size:15px;line-height:18px;color:#caa3aa">Ch 3</div><div class="a" style="left:7px;top:21.5px;font-size:15px;line-height:19px;color:#111">100 mV/div</div><div class="a" style="left:7px;top:40.8px;font-size:15px;line-height:19px;color:#111">1 M&Omega;</div><div class="a" style="left:7px;top:60.1px;font-size:15px;line-height:19px;color:#111">200 kHz</div><div class="a" style="left:73.7px;top:61.3px;font-size:9.5px;line-height:10px;color:#111">B</div><div class="a" style="left:79px;top:64.5px;font-size:10px;line-height:10px;color:#111">w</div></div><div class="a" style="left:288px;top:999px;width:90px;height:80px;border-radius:5px;overflow:hidden;background:#c9c9c9"><div class="a" style="left:0;top:0;width:90px;height:18.5px;background:#3a4722"></div><div class="a" style="left:0;top:18.5px;width:90px;height:1.5px;background:#a6a6a6"></div><div class="a" style="left:6px;top:0px;font-size:15px;line-height:18px;color:#9ad640">Ch 4</div><div class="a" style="left:7px;top:21.5px;font-size:15px;line-height:19px;color:#111">200 mV/div</div><div class="a" style="left:7px;top:40.8px;font-size:15px;line-height:19px;color:#111">1 M&Omega;</div><div class="a" style="left:7px;top:60.1px;font-size:15px;line-height:19px;color:#111">200 kHz</div><div class="a" style="left:73.7px;top:61.3px;font-size:9.5px;line-height:10px;color:#111">B</div><div class="a" style="left:79px;top:64.5px;font-size:10px;line-height:10px;color:#111">w</div></div><div class="a" style="left:383px;top:999px;width:90px;height:80px;border-radius:5px;overflow:hidden;background:#c9c9c9"><div class="a" style="left:0;top:0;width:90px;height:18.5px;background:#4a3421"></div><div class="a" style="left:0;top:18.5px;width:90px;height:1.5px;background:#a6a6a6"></div><div class="a" style="left:6px;top:0px;font-size:15px;line-height:18px;color:#f39a2c">Ch 5</div><div class="a" style="left:7px;top:21.5px;font-size:15px;line-height:19px;color:#111">1 V/div</div><div class="a" style="left:7px;top:40.8px;font-size:15px;line-height:19px;color:#111">1 M&Omega;</div><div class="a" style="left:7px;top:60.1px;font-size:15px;line-height:19px;color:#111">200 kHz</div><div class="a" style="left:73.7px;top:61.3px;font-size:9.5px;line-height:10px;color:#111">B</div><div class="a" style="left:79px;top:64.5px;font-size:10px;line-height:10px;color:#111">w</div></div><div class="a" style="left:478px;top:999px;width:90px;height:80px;border-radius:5px;overflow:hidden;background:#c9c9c9"><div class="a" style="left:0;top:0;width:90px;height:18.5px;background:#4a3421"></div><div class="a" style="left:0;top:18.5px;width:90px;height:1.5px;background:#a6a6a6"></div><div class="a" style="left:6px;top:0px;font-size:15px;line-height:18px;color:#f39a2c">Math 1</div><div class="a" style="left:7px;top:21.5px;font-size:15px;line-height:19px;color:#111">66.0645 &hellip;</div><div class="a" style="left:7px;top:40.8px;font-size:15px;line-height:19px;color:#111">Intg(ch2)&hellip;</div></div><div class="a" style="left:573px;top:999px;width:90px;height:80px;border-radius:5px;overflow:hidden;background:#c9c9c9"><div class="a" style="left:0;top:0;width:90px;height:18.5px;background:#70308c"></div><div class="a" style="left:0;top:18.5px;width:90px;height:1.5px;background:#a6a6a6"></div><div class="a" style="left:6px;top:0px;font-size:15px;line-height:18px;color:#f4f4f4">Math 2</div><div class="a" style="left:7px;top:21.5px;font-size:15px;line-height:19px;color:#111">294.034 &hellip;</div><div class="a" style="left:7px;top:40.8px;font-size:15px;line-height:19px;color:#111">-intg(ch3&hellip;</div></div><div class="a" style="left:1067px;top:998px;width:39.5px;height:79.5px;border:1px solid #5f5750;border-radius:7px;background:linear-gradient(#3a3a3a,#2b2b2b)"></div><div class="a" style="left:1071px;top:1006px;width:32px;height:2px;background:#2a2ac8"></div><div class="a" style="left:1063px;top:1010px;width:48px;height:66px;display:flex;align-items:center;justify-content:center;text-align:center;white-space:normal;font-size:21px;line-height:22px;color:#ececec">6</div><div class="a" style="left:1117px;top:1000px;width:1px;height:77px;background:#555"></div><div class="a" style="left:1128px;top:998px;width:39.5px;height:79.5px;border:1px solid #5f5750;border-radius:7px;background:linear-gradient(#3a3a3a,#2b2b2b)"></div><div class="a" style="left:1132px;top:1006px;width:32px;height:2px;background:#c8282c"></div><div class="a" style="left:1124px;top:1010px;width:48px;height:66px;display:flex;align-items:center;justify-content:center;text-align:center;white-space:normal;font-size:15px;line-height:16px;color:#ececec">Add<br>New<br>Math</div><div class="a" style="left:1173px;top:998px;width:39.5px;height:79.5px;border:1px solid #5f5750;border-radius:7px;background:linear-gradient(#3a3a3a,#2b2b2b)"></div><div class="a" style="left:1177px;top:1006px;width:32px;height:2px;background:#c4c4c4"></div><div class="a" style="left:1169px;top:1010px;width:48px;height:66px;display:flex;align-items:center;justify-content:center;text-align:center;white-space:normal;font-size:15px;line-height:16px;color:#ececec">Add<br>New<br>Ref</div><div class="a" style="left:1218px;top:998px;width:39.5px;height:79.5px;border:1px solid #5f5750;border-radius:7px;background:linear-gradient(#3a3a3a,#2b2b2b)"></div><div class="a" style="left:1222px;top:1006px;width:32px;height:2px;background:#b84ad8"></div><div class="a" style="left:1214px;top:1010px;width:48px;height:66px;display:flex;align-items:center;justify-content:center;text-align:center;white-space:normal;font-size:15px;line-height:16px;color:#ececec">Add<br>New<br>Bus</div><div class="a" style="left:1268px;top:1000px;width:1px;height:77px;background:#555"></div><div class="a" style="left:1279px;top:999px;width:200px;height:80px;border:1px solid #1a1a1a;border-radius:5px;overflow:hidden;background:#c9c9c9"><div class="a" style="left:0;top:0;width:200px;height:18.5px;background:#5c5c5c"></div><div class="a" style="left:0;top:18.5px;width:200px;height:2px;background:#a2a2a2"></div><div class="a" style="left:6px;top:-1px;font-size:15.5px;line-height:17px;color:#f2f2f2">Horizontal</div></div><div class="a" style="left:1484px;top:999px;width:160px;height:80px;border:1px solid #1a1a1a;border-radius:5px;overflow:hidden;background:#c9c9c9"><div class="a" style="left:0;top:0;width:160px;height:18.5px;background:#5c5c5c"></div><div class="a" style="left:0;top:18.5px;width:160px;height:2px;background:#a2a2a2"></div><div class="a" style="left:6px;top:-1px;font-size:15.5px;line-height:17px;color:#f2f2f2">Trigger</div></div><div class="a" style="left:1649px;top:999px;width:150px;height:80px;border:1px solid #1a1a1a;border-radius:5px;overflow:hidden;background:#c9c9c9"><div class="a" style="left:0;top:0;width:150px;height:18.5px;background:#5c5c5c"></div><div class="a" style="left:0;top:18.5px;width:150px;height:2px;background:#a2a2a2"></div><div class="a" style="left:6px;top:-1px;font-size:15.5px;line-height:17px;color:#f2f2f2">Acquisition</div></div><div class="a" style="left:1286.5px;top:1022px;font-size:15px;line-height:18px;color:#111;">2.4 ms/div</div><div class="a" style="left:1392.5px;top:1022px;font-size:15px;line-height:18px;color:#111;">24 ms</div><div class="a" style="left:1286.5px;top:1041px;font-size:15px;line-height:18px;color:#111;">SR: 1 MS/s</div><div class="a" style="left:1392.5px;top:1041px;font-size:15px;line-height:18px;color:#111;">1 &mu;s/pt</div><div class="a" style="left:1286.5px;top:1060px;font-size:15px;line-height:18px;color:#111;">RL: 24 kpts</div><div class="a" style="left:1406px;top:1060px;font-size:15px;line-height:18px;color:#111;">3%</div><svg class="a" style="left:1390px;top:1060px" width="14" height="16" viewBox="0 0 14 16"><path d="M2.5 2.5H11V11.5H8.5L6.75 14L5 11.5H2.5Z" fill="#111" stroke="#f08c20" stroke-width="1.6"/><text x="6.75" y="10" font-size="8" font-weight="bold" fill="#fff" text-anchor="middle" font-family="Liberation Sans">T</text></svg><div class="a" style="left:1491px;top:1023px;width:29.5px;height:16.5px;border-radius:5px;background:#2222c4;border:1px solid #111"></div><div class="a" style="left:1491px;top:1022px;width:29.5px;text-align:center;font-size:15px;line-height:18px;color:#fff">6</div><svg class="a" style="left:1528px;top:1023px" width="22" height="16" viewBox="0 0 22 16"><path d="M3 13H7.5L15.5 3.7H19" fill="none" stroke="#3c3c8c" stroke-width="1.1"/></svg><div class="a" style="left:1557.5px;top:1022px;font-size:15px;line-height:18px;color:#111;">3.99 V</div><div class="a" style="left:1656px;top:1022px;font-size:15px;line-height:18px;color:#111;">Manual,</div><div class="a" style="left:1737px;top:1022px;font-size:15px;line-height:18px;color:#111;">Analyze</div><div class="a" style="left:1656px;top:1041px;font-size:15px;line-height:18px;color:#111;">High Res: 16 bits</div><div class="a" style="left:1656px;top:1060px;font-size:15px;line-height:18px;color:#111;">Single: 0 /1</div><div class="a" style="left:1811px;top:1000px;width:1px;height:77px;background:#555"></div><div class="a" style="left:1822.5px;top:998.5px;width:89px;height:35px;border-radius:6px;background:#f51c24;border:1px solid #5a5a5a;text-align:center;font-size:13.5px;line-height:31px;font-weight:bold;color:#fff;letter-spacing:0.2px">Preview</div><div class="a" style="left:1822.5px;top:1042px;width:89px;height:36px;border-radius:5px;background:#c9c9c9;border:1px solid #8a8a8a;text-align:center;font-size:15px;line-height:16.8px;color:#111;padding-top:0px">28 May 2024<br>11:02:10 PM</div></body></html>
